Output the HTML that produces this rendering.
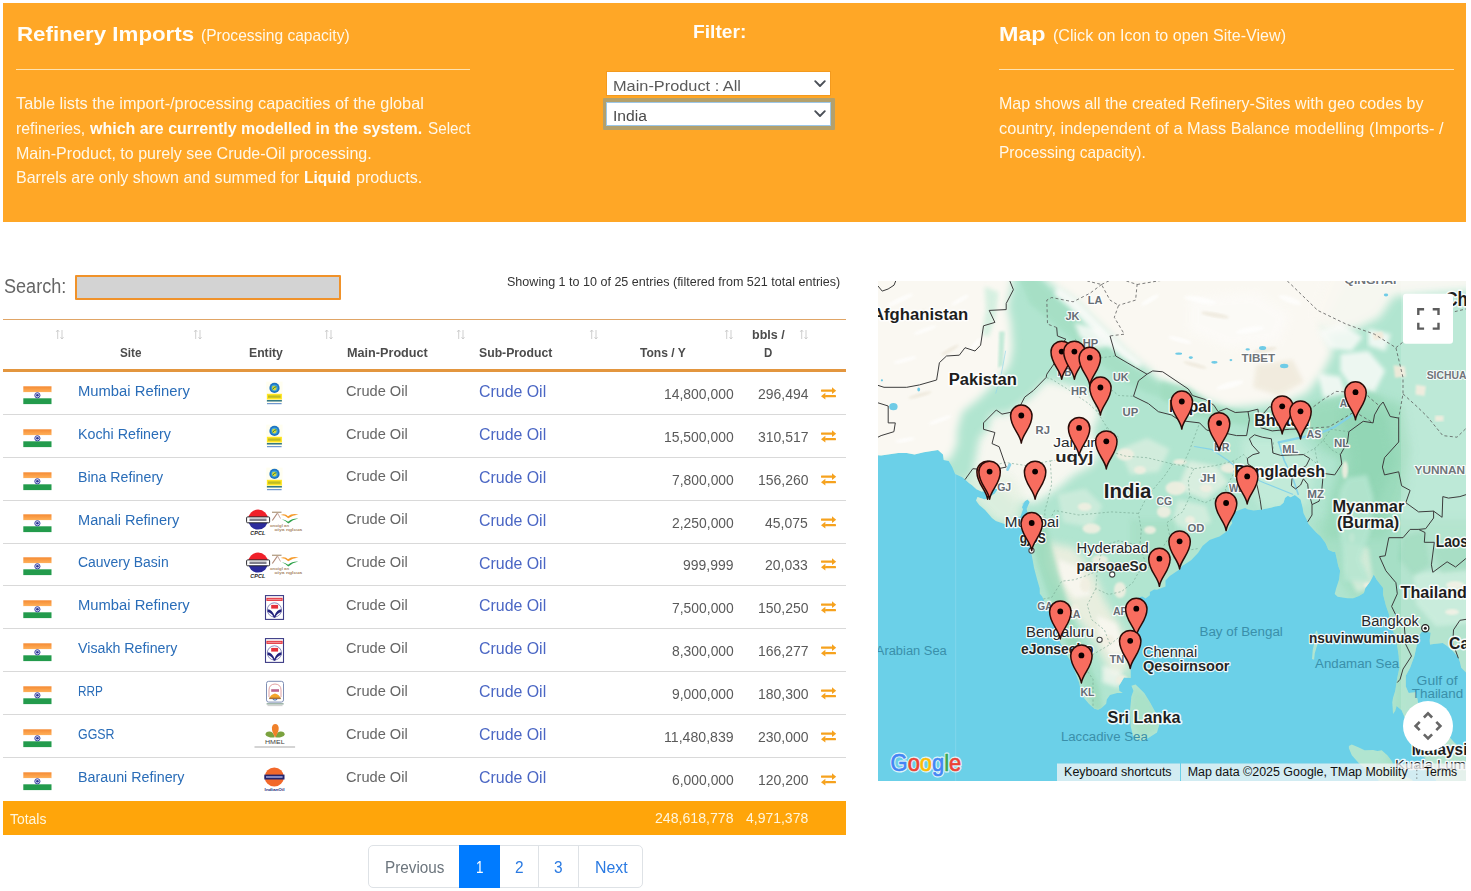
<!DOCTYPE html>
<html lang="en"><head><meta charset="utf-8"><title>Refinery Imports</title>
<style>
html,body{margin:0;padding:0}body{width:1471px;height:891px;position:relative;overflow:hidden;background:#fff;font-family:"Liberation Sans",sans-serif}
.t{position:absolute;white-space:nowrap;line-height:1;display:block;transform-origin:0 50%}
#map{position:absolute;left:878px;top:281px;width:588px;height:500px;overflow:hidden}
</style></head>
<body>
<div style="position:absolute;left:3px;top:3px;width:1463px;height:219px;background:#ffa726"></div>
<div style="position:absolute;left:16px;top:69px;width:453.5px;height:1px;background:#ffe3b0"></div>
<div style="position:absolute;left:999px;top:69px;width:454.5px;height:1px;background:#ffe3b0"></div>
<div style="position:absolute;left:606px;top:71px;width:225px;height:25px;box-sizing:border-box;border:1px solid #f39a1e;background:#fff"></div>
<div style="position:absolute;left:602.5px;top:97.5px;width:232px;height:32px;box-sizing:border-box;background:#b3a06c;border-radius:1px"></div>
<div style="position:absolute;left:606px;top:101.5px;width:225px;height:24.5px;box-sizing:border-box;border:1px solid #9cc7e8;background:#fff"></div>
<svg style="position:absolute;left:812px;top:78.2px" width="16" height="12" viewBox="0 0 16 12"><path d="M3.2 3.2 L8 8 L12.8 3.2" fill="none" stroke="#4a4f57" stroke-width="1.9" stroke-linecap="round" stroke-linejoin="round"/></svg>
<svg style="position:absolute;left:812px;top:108.1px" width="16" height="12" viewBox="0 0 16 12"><path d="M3.2 3.2 L8 8 L12.8 3.2" fill="none" stroke="#4a4f57" stroke-width="1.9" stroke-linecap="round" stroke-linejoin="round"/></svg>
<div style="position:absolute;left:75px;top:275px;width:266px;height:25px;box-sizing:border-box;border:2px solid #f0922a;background:#d3d3d3;border-radius:1px"></div>
<div style="position:absolute;left:3px;top:319px;width:843px;height:1px;background:#e0a566"></div>
<div style="position:absolute;left:3px;top:369px;width:843px;height:2.6px;background:#e3963f"></div>
<div style="position:absolute;left:3px;top:414px;width:843px;height:1px;background:#d9d9d9"></div>
<div style="position:absolute;left:3px;top:457px;width:843px;height:1px;background:#d9d9d9"></div>
<div style="position:absolute;left:3px;top:500px;width:843px;height:1px;background:#d9d9d9"></div>
<div style="position:absolute;left:3px;top:543px;width:843px;height:1px;background:#d9d9d9"></div>
<div style="position:absolute;left:3px;top:585px;width:843px;height:1px;background:#d9d9d9"></div>
<div style="position:absolute;left:3px;top:628px;width:843px;height:1px;background:#d9d9d9"></div>
<div style="position:absolute;left:3px;top:671px;width:843px;height:1px;background:#d9d9d9"></div>
<div style="position:absolute;left:3px;top:714px;width:843px;height:1px;background:#d9d9d9"></div>
<div style="position:absolute;left:3px;top:757px;width:843px;height:1px;background:#d9d9d9"></div>
<svg style="position:absolute;left:55.1px;top:329.1px" width="10" height="11" viewBox="0 0 10 11"><g fill="none" stroke="#c9c9c9" stroke-width="0.9"><path d="M2.7 10 V1 M1.2 2.8 L2.7 1 L4.2 2.8"/><path d="M7 1 V10 M5.5 8.2 L7 10 L8.5 8.2"/></g></svg>
<svg style="position:absolute;left:193.1px;top:329.1px" width="10" height="11" viewBox="0 0 10 11"><g fill="none" stroke="#c9c9c9" stroke-width="0.9"><path d="M2.7 10 V1 M1.2 2.8 L2.7 1 L4.2 2.8"/><path d="M7 1 V10 M5.5 8.2 L7 10 L8.5 8.2"/></g></svg>
<svg style="position:absolute;left:323.9px;top:329.1px" width="10" height="11" viewBox="0 0 10 11"><g fill="none" stroke="#c9c9c9" stroke-width="0.9"><path d="M2.7 10 V1 M1.2 2.8 L2.7 1 L4.2 2.8"/><path d="M7 1 V10 M5.5 8.2 L7 10 L8.5 8.2"/></g></svg>
<svg style="position:absolute;left:456.3px;top:329.1px" width="10" height="11" viewBox="0 0 10 11"><g fill="none" stroke="#c9c9c9" stroke-width="0.9"><path d="M2.7 10 V1 M1.2 2.8 L2.7 1 L4.2 2.8"/><path d="M7 1 V10 M5.5 8.2 L7 10 L8.5 8.2"/></g></svg>
<svg style="position:absolute;left:589.0px;top:329.1px" width="10" height="11" viewBox="0 0 10 11"><g fill="none" stroke="#c9c9c9" stroke-width="0.9"><path d="M2.7 10 V1 M1.2 2.8 L2.7 1 L4.2 2.8"/><path d="M7 1 V10 M5.5 8.2 L7 10 L8.5 8.2"/></g></svg>
<svg style="position:absolute;left:723.6px;top:329.3px" width="10" height="11" viewBox="0 0 10 11"><g fill="none" stroke="#c9c9c9" stroke-width="0.9"><path d="M2.7 10 V1 M1.2 2.8 L2.7 1 L4.2 2.8"/><path d="M7 1 V10 M5.5 8.2 L7 10 L8.5 8.2"/></g></svg>
<svg style="position:absolute;left:798.7px;top:329.3px" width="10" height="11" viewBox="0 0 10 11"><g fill="none" stroke="#c9c9c9" stroke-width="0.9"><path d="M2.7 10 V1 M1.2 2.8 L2.7 1 L4.2 2.8"/><path d="M7 1 V10 M5.5 8.2 L7 10 L8.5 8.2"/></g></svg>
<div style="position:absolute;left:3px;top:800.6px;width:843px;height:34.4px;background:#ffa50a"></div>
<div style="position:absolute;left:368px;top:845px;width:275px;height:43px;box-sizing:border-box;border:1px solid #dee2e6;border-radius:5px;background:#fff"></div>
<div style="position:absolute;left:459px;top:845px;width:41px;height:43px;background:#007bff"></div>
<div style="position:absolute;left:538.2px;top:845px;width:1px;height:43px;background:#dee2e6"></div>
<div style="position:absolute;left:578px;top:845px;width:1px;height:43px;background:#dee2e6"></div>
<svg style="position:absolute;left:22.5px;top:385.80px" width="29" height="19" viewBox="0 0 29 19"><defs><linearGradient id="og0" x1="0" y1="0" x2="0" y2="1"><stop offset="0" stop-color="#f58a33"/><stop offset="1" stop-color="#ffb25c"/></linearGradient></defs><rect x="0.3" y="0.3" width="28.2" height="6" fill="url(#og0)"/><rect x="0.3" y="6.3" width="28.2" height="6" fill="#fff"/><rect x="0.3" y="12.3" width="28.2" height="5.8" fill="#239b4c"/><circle cx="14.4" cy="9.3" r="2.6" fill="#dfe3f5" stroke="#3a45a5" stroke-width="1"/><circle cx="14.4" cy="9.3" r="1.3" fill="#2b3595"/></svg>
<svg style="position:absolute;left:264px;top:380.00px" width="22" height="27" viewBox="264 380 22 27"><rect x="266.3" y="381.6" width="16.2" height="22" fill="#fffef0"/><circle cx="274.5" cy="387.9" r="5.1" fill="#1d74c4"/><circle cx="274.5" cy="387.9" r="3.3" fill="#3fa3d8"/><circle cx="274.3" cy="388.1" r="2.3" fill="#d7d83a"/><path d="M272.6 389.4 q1.8 -3 3.8 -2.6" stroke="#2d7d3a" stroke-width="1" fill="none"/><rect x="266.9" y="393.8" width="15" height="5.7" fill="#ffe51f"/><rect x="268" y="395.4" width="12.6" height="2.4" fill="#8a9a2a" opacity=".55"/><rect x="266.9" y="400.1" width="15" height="1.4" fill="#1f6a78"/><rect x="267" y="403.1" width="14.6" height="1.1" fill="#3a6fc0" opacity=".8"/></svg>
<svg style="position:absolute;left:820px;top:385.90px" width="18" height="14" viewBox="0 0 18 14"><g fill="#f6a21e"><rect x="1" y="3.6" width="11.6" height="2.1" rx=".4"/><path d="M12 1.2 L16.2 4.65 L12 8.1 Z"/><rect x="5" y="9.1" width="11" height="2.1" rx=".4"/><path d="M5.4 6.7 L1 10.15 L5.4 13.6 Z"/></g></svg>
<svg style="position:absolute;left:22.5px;top:428.67px" width="29" height="19" viewBox="0 0 29 19"><defs><linearGradient id="og1" x1="0" y1="0" x2="0" y2="1"><stop offset="0" stop-color="#f58a33"/><stop offset="1" stop-color="#ffb25c"/></linearGradient></defs><rect x="0.3" y="0.3" width="28.2" height="6" fill="url(#og1)"/><rect x="0.3" y="6.3" width="28.2" height="6" fill="#fff"/><rect x="0.3" y="12.3" width="28.2" height="5.8" fill="#239b4c"/><circle cx="14.4" cy="9.3" r="2.6" fill="#dfe3f5" stroke="#3a45a5" stroke-width="1"/><circle cx="14.4" cy="9.3" r="1.3" fill="#2b3595"/></svg>
<svg style="position:absolute;left:264px;top:422.87px" width="22" height="27" viewBox="264 380 22 27"><rect x="266.3" y="381.6" width="16.2" height="22" fill="#fffef0"/><circle cx="274.5" cy="387.9" r="5.1" fill="#1d74c4"/><circle cx="274.5" cy="387.9" r="3.3" fill="#3fa3d8"/><circle cx="274.3" cy="388.1" r="2.3" fill="#d7d83a"/><path d="M272.6 389.4 q1.8 -3 3.8 -2.6" stroke="#2d7d3a" stroke-width="1" fill="none"/><rect x="266.9" y="393.8" width="15" height="5.7" fill="#ffe51f"/><rect x="268" y="395.4" width="12.6" height="2.4" fill="#8a9a2a" opacity=".55"/><rect x="266.9" y="400.1" width="15" height="1.4" fill="#1f6a78"/><rect x="267" y="403.1" width="14.6" height="1.1" fill="#3a6fc0" opacity=".8"/></svg>
<svg style="position:absolute;left:820px;top:428.77px" width="18" height="14" viewBox="0 0 18 14"><g fill="#f6a21e"><rect x="1" y="3.6" width="11.6" height="2.1" rx=".4"/><path d="M12 1.2 L16.2 4.65 L12 8.1 Z"/><rect x="5" y="9.1" width="11" height="2.1" rx=".4"/><path d="M5.4 6.7 L1 10.15 L5.4 13.6 Z"/></g></svg>
<svg style="position:absolute;left:22.5px;top:471.54px" width="29" height="19" viewBox="0 0 29 19"><defs><linearGradient id="og2" x1="0" y1="0" x2="0" y2="1"><stop offset="0" stop-color="#f58a33"/><stop offset="1" stop-color="#ffb25c"/></linearGradient></defs><rect x="0.3" y="0.3" width="28.2" height="6" fill="url(#og2)"/><rect x="0.3" y="6.3" width="28.2" height="6" fill="#fff"/><rect x="0.3" y="12.3" width="28.2" height="5.8" fill="#239b4c"/><circle cx="14.4" cy="9.3" r="2.6" fill="#dfe3f5" stroke="#3a45a5" stroke-width="1"/><circle cx="14.4" cy="9.3" r="1.3" fill="#2b3595"/></svg>
<svg style="position:absolute;left:264px;top:465.74px" width="22" height="27" viewBox="264 380 22 27"><rect x="266.3" y="381.6" width="16.2" height="22" fill="#fffef0"/><circle cx="274.5" cy="387.9" r="5.1" fill="#1d74c4"/><circle cx="274.5" cy="387.9" r="3.3" fill="#3fa3d8"/><circle cx="274.3" cy="388.1" r="2.3" fill="#d7d83a"/><path d="M272.6 389.4 q1.8 -3 3.8 -2.6" stroke="#2d7d3a" stroke-width="1" fill="none"/><rect x="266.9" y="393.8" width="15" height="5.7" fill="#ffe51f"/><rect x="268" y="395.4" width="12.6" height="2.4" fill="#8a9a2a" opacity=".55"/><rect x="266.9" y="400.1" width="15" height="1.4" fill="#1f6a78"/><rect x="267" y="403.1" width="14.6" height="1.1" fill="#3a6fc0" opacity=".8"/></svg>
<svg style="position:absolute;left:820px;top:471.64px" width="18" height="14" viewBox="0 0 18 14"><g fill="#f6a21e"><rect x="1" y="3.6" width="11.6" height="2.1" rx=".4"/><path d="M12 1.2 L16.2 4.65 L12 8.1 Z"/><rect x="5" y="9.1" width="11" height="2.1" rx=".4"/><path d="M5.4 6.7 L1 10.15 L5.4 13.6 Z"/></g></svg>
<svg style="position:absolute;left:22.5px;top:514.41px" width="29" height="19" viewBox="0 0 29 19"><defs><linearGradient id="og3" x1="0" y1="0" x2="0" y2="1"><stop offset="0" stop-color="#f58a33"/><stop offset="1" stop-color="#ffb25c"/></linearGradient></defs><rect x="0.3" y="0.3" width="28.2" height="6" fill="url(#og3)"/><rect x="0.3" y="6.3" width="28.2" height="6" fill="#fff"/><rect x="0.3" y="12.3" width="28.2" height="5.8" fill="#239b4c"/><circle cx="14.4" cy="9.3" r="2.6" fill="#dfe3f5" stroke="#3a45a5" stroke-width="1"/><circle cx="14.4" cy="9.3" r="1.3" fill="#2b3595"/></svg>
<svg style="position:absolute;left:244px;top:506.00px" width="62" height="34" viewBox="244 506 62 34" font-family="Liberation Sans, sans-serif"><defs><clipPath id="cpc128"><circle cx="258.1" cy="519.6" r="10"/></clipPath></defs><g clip-path="url(#cpc128)"><rect x="246" y="508" width="25" height="11.6" fill="#f0202a"/><rect x="246" y="519.6" width="25" height="12" fill="#2a2a9c"/></g><rect x="246.6" y="516.9" width="23" height="5.9" rx="1" fill="#fff" stroke="#2a2a30" stroke-width="1"/><rect x="249.5" y="518.6" width="17" height="2.4" fill="#556" opacity=".75"/><text x="250.3" y="535" font-family="Liberation Sans" font-weight="700" font-style="italic" font-size="5.2" textLength="15" lengthAdjust="spacingAndGlyphs" fill="#222">CPCL</text><path d="M272 512.3 h9.5" stroke="#b9a58c" stroke-width="1.4" fill="none"/><path d="M277.5 513 L272.3 520.5" stroke="#b08a78" stroke-width="1.2" fill="none"/><path d="M277.5 513 L280.5 518.5" stroke="#c9a9a0" stroke-width="1" fill="none"/><path d="M280.5 515 q4.5 -2.2 7.5 1.2 q4 -3.2 10.5 -1.6 q-6 0.6 -10.2 3.6 q-3.4 -3.4 -7.8 -3.2z" fill="#f59b2c"/><path d="M281.5 519.3 q3.6 0.2 6.6 2.4 q4.4 -3.6 10.2 -3.2 q-5.6 1.2 -10 5 q-3.2 -3.2 -6.8 -4.2z" fill="#2ea24a"/><text x="270" y="526.6" font-size="4.2" font-weight="700" fill="#a98868" textLength="19" lengthAdjust="spacingAndGlyphs">onoigl an</text><text x="274.5" y="531.4" font-size="4.4" font-weight="700" fill="#a98868" textLength="27.5" lengthAdjust="spacingAndGlyphs">oiya nglcua</text></svg>
<svg style="position:absolute;left:820px;top:514.51px" width="18" height="14" viewBox="0 0 18 14"><g fill="#f6a21e"><rect x="1" y="3.6" width="11.6" height="2.1" rx=".4"/><path d="M12 1.2 L16.2 4.65 L12 8.1 Z"/><rect x="5" y="9.1" width="11" height="2.1" rx=".4"/><path d="M5.4 6.7 L1 10.15 L5.4 13.6 Z"/></g></svg>
<svg style="position:absolute;left:22.5px;top:557.28px" width="29" height="19" viewBox="0 0 29 19"><defs><linearGradient id="og4" x1="0" y1="0" x2="0" y2="1"><stop offset="0" stop-color="#f58a33"/><stop offset="1" stop-color="#ffb25c"/></linearGradient></defs><rect x="0.3" y="0.3" width="28.2" height="6" fill="url(#og4)"/><rect x="0.3" y="6.3" width="28.2" height="6" fill="#fff"/><rect x="0.3" y="12.3" width="28.2" height="5.8" fill="#239b4c"/><circle cx="14.4" cy="9.3" r="2.6" fill="#dfe3f5" stroke="#3a45a5" stroke-width="1"/><circle cx="14.4" cy="9.3" r="1.3" fill="#2b3595"/></svg>
<svg style="position:absolute;left:244px;top:548.87px" width="62" height="34" viewBox="244 506 62 34" font-family="Liberation Sans, sans-serif"><defs><clipPath id="cpc171"><circle cx="258.1" cy="519.6" r="10"/></clipPath></defs><g clip-path="url(#cpc171)"><rect x="246" y="508" width="25" height="11.6" fill="#f0202a"/><rect x="246" y="519.6" width="25" height="12" fill="#2a2a9c"/></g><rect x="246.6" y="516.9" width="23" height="5.9" rx="1" fill="#fff" stroke="#2a2a30" stroke-width="1"/><rect x="249.5" y="518.6" width="17" height="2.4" fill="#556" opacity=".75"/><text x="250.3" y="535" font-family="Liberation Sans" font-weight="700" font-style="italic" font-size="5.2" textLength="15" lengthAdjust="spacingAndGlyphs" fill="#222">CPCL</text><path d="M272 512.3 h9.5" stroke="#b9a58c" stroke-width="1.4" fill="none"/><path d="M277.5 513 L272.3 520.5" stroke="#b08a78" stroke-width="1.2" fill="none"/><path d="M277.5 513 L280.5 518.5" stroke="#c9a9a0" stroke-width="1" fill="none"/><path d="M280.5 515 q4.5 -2.2 7.5 1.2 q4 -3.2 10.5 -1.6 q-6 0.6 -10.2 3.6 q-3.4 -3.4 -7.8 -3.2z" fill="#f59b2c"/><path d="M281.5 519.3 q3.6 0.2 6.6 2.4 q4.4 -3.6 10.2 -3.2 q-5.6 1.2 -10 5 q-3.2 -3.2 -6.8 -4.2z" fill="#2ea24a"/><text x="270" y="526.6" font-size="4.2" font-weight="700" fill="#a98868" textLength="19" lengthAdjust="spacingAndGlyphs">onoigl an</text><text x="274.5" y="531.4" font-size="4.4" font-weight="700" fill="#a98868" textLength="27.5" lengthAdjust="spacingAndGlyphs">oiya nglcua</text></svg>
<svg style="position:absolute;left:820px;top:557.38px" width="18" height="14" viewBox="0 0 18 14"><g fill="#f6a21e"><rect x="1" y="3.6" width="11.6" height="2.1" rx=".4"/><path d="M12 1.2 L16.2 4.65 L12 8.1 Z"/><rect x="5" y="9.1" width="11" height="2.1" rx=".4"/><path d="M5.4 6.7 L1 10.15 L5.4 13.6 Z"/></g></svg>
<svg style="position:absolute;left:22.5px;top:600.15px" width="29" height="19" viewBox="0 0 29 19"><defs><linearGradient id="og5" x1="0" y1="0" x2="0" y2="1"><stop offset="0" stop-color="#f58a33"/><stop offset="1" stop-color="#ffb25c"/></linearGradient></defs><rect x="0.3" y="0.3" width="28.2" height="6" fill="url(#og5)"/><rect x="0.3" y="6.3" width="28.2" height="6" fill="#fff"/><rect x="0.3" y="12.3" width="28.2" height="5.8" fill="#239b4c"/><circle cx="14.4" cy="9.3" r="2.6" fill="#dfe3f5" stroke="#3a45a5" stroke-width="1"/><circle cx="14.4" cy="9.3" r="1.3" fill="#2b3595"/></svg>
<svg style="position:absolute;left:263px;top:593.00px" width="23" height="28" viewBox="263 593 23 28"><rect x="265.5" y="595.6" width="18" height="23.8" fill="#fff" stroke="#3d3c86" stroke-width="1.1"/><rect x="266.4" y="597.8" width="16.2" height="3.1" fill="#e4303a"/><rect x="267.4" y="598.8" width="14.2" height="1" fill="#fff" opacity=".55"/><circle cx="274.4" cy="609.9" r="7.1" fill="#fff" stroke="#5b5aa0" stroke-width=".7"/><rect x="271.2" y="604.9" width="6.9" height="3.7" fill="#e4303a"/><path d="M267.6 609.3 q4.6 0.2 6.9 6.4 q2.2 -6.2 6.9 -6.4 l0 2.6 q-4.4 0.8 -6.2 5.9 l-1.4 0 q-1.8 -5.1 -6.2 -5.9z" fill="#23237d"/></svg>
<svg style="position:absolute;left:820px;top:600.25px" width="18" height="14" viewBox="0 0 18 14"><g fill="#f6a21e"><rect x="1" y="3.6" width="11.6" height="2.1" rx=".4"/><path d="M12 1.2 L16.2 4.65 L12 8.1 Z"/><rect x="5" y="9.1" width="11" height="2.1" rx=".4"/><path d="M5.4 6.7 L1 10.15 L5.4 13.6 Z"/></g></svg>
<svg style="position:absolute;left:22.5px;top:643.02px" width="29" height="19" viewBox="0 0 29 19"><defs><linearGradient id="og6" x1="0" y1="0" x2="0" y2="1"><stop offset="0" stop-color="#f58a33"/><stop offset="1" stop-color="#ffb25c"/></linearGradient></defs><rect x="0.3" y="0.3" width="28.2" height="6" fill="url(#og6)"/><rect x="0.3" y="6.3" width="28.2" height="6" fill="#fff"/><rect x="0.3" y="12.3" width="28.2" height="5.8" fill="#239b4c"/><circle cx="14.4" cy="9.3" r="2.6" fill="#dfe3f5" stroke="#3a45a5" stroke-width="1"/><circle cx="14.4" cy="9.3" r="1.3" fill="#2b3595"/></svg>
<svg style="position:absolute;left:263px;top:635.87px" width="23" height="28" viewBox="263 593 23 28"><rect x="265.5" y="595.6" width="18" height="23.8" fill="#fff" stroke="#3d3c86" stroke-width="1.1"/><rect x="266.4" y="597.8" width="16.2" height="3.1" fill="#e4303a"/><rect x="267.4" y="598.8" width="14.2" height="1" fill="#fff" opacity=".55"/><circle cx="274.4" cy="609.9" r="7.1" fill="#fff" stroke="#5b5aa0" stroke-width=".7"/><rect x="271.2" y="604.9" width="6.9" height="3.7" fill="#e4303a"/><path d="M267.6 609.3 q4.6 0.2 6.9 6.4 q2.2 -6.2 6.9 -6.4 l0 2.6 q-4.4 0.8 -6.2 5.9 l-1.4 0 q-1.8 -5.1 -6.2 -5.9z" fill="#23237d"/></svg>
<svg style="position:absolute;left:820px;top:643.12px" width="18" height="14" viewBox="0 0 18 14"><g fill="#f6a21e"><rect x="1" y="3.6" width="11.6" height="2.1" rx=".4"/><path d="M12 1.2 L16.2 4.65 L12 8.1 Z"/><rect x="5" y="9.1" width="11" height="2.1" rx=".4"/><path d="M5.4 6.7 L1 10.15 L5.4 13.6 Z"/></g></svg>
<svg style="position:absolute;left:22.5px;top:685.89px" width="29" height="19" viewBox="0 0 29 19"><defs><linearGradient id="og7" x1="0" y1="0" x2="0" y2="1"><stop offset="0" stop-color="#f58a33"/><stop offset="1" stop-color="#ffb25c"/></linearGradient></defs><rect x="0.3" y="0.3" width="28.2" height="6" fill="url(#og7)"/><rect x="0.3" y="6.3" width="28.2" height="6" fill="#fff"/><rect x="0.3" y="12.3" width="28.2" height="5.8" fill="#239b4c"/><circle cx="14.4" cy="9.3" r="2.6" fill="#dfe3f5" stroke="#3a45a5" stroke-width="1"/><circle cx="14.4" cy="9.3" r="1.3" fill="#2b3595"/></svg>
<svg style="position:absolute;left:263px;top:679.00px" width="23" height="28" viewBox="263 679 23 28"><rect x="266.5" y="681.3" width="17" height="20.8" rx="2.2" fill="#fff" stroke="#7f8fb5" stroke-width="1"/><path d="M269 697 V690 q0 -5.6 6 -6 q6 0.4 6 6 V697" fill="none" stroke="#d98a8a" stroke-width=".8"/><rect x="271.2" y="689.2" width="7.8" height="2.6" fill="#b04a78" opacity=".85"/><path d="M269.4 698.6 q1 -4.4 5.6 -5.2 q4.6 0.8 5.6 5.2z" fill="#f4a62a"/><rect x="269.2" y="697.6" width="11.6" height="1.5" fill="#a5713a"/><path d="M272.8 699.4 q2.2 1.4 4.4 0" stroke="#3a70b8" stroke-width="1" fill="none"/><rect x="266.6" y="703.2" width="17" height="1.3" fill="#6c8c7c" opacity=".8"/><rect x="267.5" y="705.2" width="15" height=".9" fill="#bbb" opacity=".8"/></svg>
<svg style="position:absolute;left:820px;top:685.99px" width="18" height="14" viewBox="0 0 18 14"><g fill="#f6a21e"><rect x="1" y="3.6" width="11.6" height="2.1" rx=".4"/><path d="M12 1.2 L16.2 4.65 L12 8.1 Z"/><rect x="5" y="9.1" width="11" height="2.1" rx=".4"/><path d="M5.4 6.7 L1 10.15 L5.4 13.6 Z"/></g></svg>
<svg style="position:absolute;left:22.5px;top:728.76px" width="29" height="19" viewBox="0 0 29 19"><defs><linearGradient id="og8" x1="0" y1="0" x2="0" y2="1"><stop offset="0" stop-color="#f58a33"/><stop offset="1" stop-color="#ffb25c"/></linearGradient></defs><rect x="0.3" y="0.3" width="28.2" height="6" fill="url(#og8)"/><rect x="0.3" y="6.3" width="28.2" height="6" fill="#fff"/><rect x="0.3" y="12.3" width="28.2" height="5.8" fill="#239b4c"/><circle cx="14.4" cy="9.3" r="2.6" fill="#dfe3f5" stroke="#3a45a5" stroke-width="1"/><circle cx="14.4" cy="9.3" r="1.3" fill="#2b3595"/></svg>
<svg style="position:absolute;left:252px;top:722.00px" width="46" height="28" viewBox="252 722 46 28"><path d="M265.4 734.6 q0.4 -3.4 4.6 -3 q3.6 0.6 4.8 5.6 q-3 0.8 -6 -0.2 q-3 -0.8 -3.4 -2.4z" fill="#7ba23f"/><path d="M284.8 734.6 q-0.4 -3.4 -4.6 -3 q-3.6 0.6 -4.8 5.6 q3 0.8 6 -0.2 q3 -0.8 3.4 -2.4z" fill="#7ba23f"/><path d="M275.3 737.4 q-3.6 -5.4 -3.4 -9.6 q0.4 -3.6 3.4 -3.8 q3 0.2 3.4 3.8 q0.2 4.2 -3.4 9.6z" fill="#f0812a"/><text x="265" y="743.7" font-family="Liberation Sans" font-size="4.8" font-weight="400" textLength="19.6" lengthAdjust="spacingAndGlyphs" fill="#444">HMEL</text><rect x="254.5" y="746.4" width="40.6" height="1.2" fill="#888" opacity=".6"/></svg>
<svg style="position:absolute;left:820px;top:728.86px" width="18" height="14" viewBox="0 0 18 14"><g fill="#f6a21e"><rect x="1" y="3.6" width="11.6" height="2.1" rx=".4"/><path d="M12 1.2 L16.2 4.65 L12 8.1 Z"/><rect x="5" y="9.1" width="11" height="2.1" rx=".4"/><path d="M5.4 6.7 L1 10.15 L5.4 13.6 Z"/></g></svg>
<svg style="position:absolute;left:22.5px;top:771.63px" width="29" height="19" viewBox="0 0 29 19"><defs><linearGradient id="og9" x1="0" y1="0" x2="0" y2="1"><stop offset="0" stop-color="#f58a33"/><stop offset="1" stop-color="#ffb25c"/></linearGradient></defs><rect x="0.3" y="0.3" width="28.2" height="6" fill="url(#og9)"/><rect x="0.3" y="6.3" width="28.2" height="6" fill="#fff"/><rect x="0.3" y="12.3" width="28.2" height="5.8" fill="#239b4c"/><circle cx="14.4" cy="9.3" r="2.6" fill="#dfe3f5" stroke="#3a45a5" stroke-width="1"/><circle cx="14.4" cy="9.3" r="1.3" fill="#2b3595"/></svg>
<svg style="position:absolute;left:262px;top:765.00px" width="26" height="30" viewBox="262 765 26 30"><circle cx="274.3" cy="777" r="9.6" fill="#f2682a"/><rect x="264.3" y="774.6" width="20.2" height="4.9" fill="#23246e"/><rect x="266" y="776" width="16.6" height="2" fill="#9aa0d8" opacity=".8"/><text x="264.6" y="791.4" font-family="Liberation Sans" font-size="4.4" font-weight="700" textLength="20" lengthAdjust="spacingAndGlyphs" fill="#1a2a7a">IndianOil</text></svg>
<svg style="position:absolute;left:820px;top:771.73px" width="18" height="14" viewBox="0 0 18 14"><g fill="#f6a21e"><rect x="1" y="3.6" width="11.6" height="2.1" rx=".4"/><path d="M12 1.2 L16.2 4.65 L12 8.1 Z"/><rect x="5" y="9.1" width="11" height="2.1" rx=".4"/><path d="M5.4 6.7 L1 10.15 L5.4 13.6 Z"/></g></svg>
<span class="t" id="t0" style="left:16.60px;top:22.70px;font-size:21px;font-weight:700;color:#fffdf8;transform:scaleX(1.0613);">Refinery Imports</span>
<span class="t" id="t1" style="left:201.00px;top:26.70px;font-size:16.5px;font-weight:400;color:#fff8ea;transform:scaleX(0.9421);">(Processing capacity)</span>
<span class="t" id="t2" style="left:16.30px;top:95.40px;font-size:16.5px;font-weight:400;color:#fff8ea;transform:scaleX(0.9883);">Table lists the import-/processing capacities of the global</span>
<span class="t" id="t3" style="left:16.30px;top:120.00px;font-size:16.5px;font-weight:400;color:#fff8ea;transform:scaleX(0.9551);">refineries,</span>
<span class="t" id="t4" style="left:89.70px;top:120.00px;font-size:16.5px;font-weight:700;color:#fffdf8;transform:scaleX(0.9686);">which are currently modelled in the system.</span>
<span class="t" id="t5" style="left:427.50px;top:120.00px;font-size:16.5px;font-weight:400;color:#fff8ea;transform:scaleX(0.9246);">Select</span>
<span class="t" id="t6" style="left:16.30px;top:144.70px;font-size:16.5px;font-weight:400;color:#fff8ea;transform:scaleX(0.9721);">Main-Product, to purely see Crude-Oil processing.</span>
<span class="t" id="t7" style="left:16.30px;top:168.90px;font-size:16.5px;font-weight:400;color:#fff8ea;transform:scaleX(0.9711);">Barrels are only shown and summed for</span>
<span class="t" id="t8" style="left:304.10px;top:168.90px;font-size:16.5px;font-weight:700;color:#fffdf8;transform:scaleX(0.9437);">Liquid</span>
<span class="t" id="t9" style="left:356.30px;top:168.90px;font-size:16.5px;font-weight:400;color:#fff8ea;transform:scaleX(0.9753);">products.</span>
<span class="t" id="t10" style="left:692.50px;top:21.90px;font-size:19px;font-weight:700;color:#fffdf8;transform:scaleX(1.0117);">Filter:</span>
<span class="t" id="t11" style="left:613.00px;top:78.00px;font-size:15.5px;font-weight:400;color:#5a5a5a;transform:scaleX(1.0538);">Main-Product : All</span>
<span class="t" id="t12" style="left:613.00px;top:107.50px;font-size:15.5px;font-weight:400;color:#4a4a4a;transform:scaleX(1.0082);">India</span>
<span class="t" id="t13" style="left:999.40px;top:22.70px;font-size:21px;font-weight:700;color:#fffdf8;transform:scaleX(1.1095);">Map</span>
<span class="t" id="t14" style="left:1053.40px;top:26.70px;font-size:16.5px;font-weight:400;color:#fff8ea;transform:scaleX(0.9746);">(Click on Icon to open Site-View)</span>
<span class="t" id="t15" style="left:999.40px;top:95.10px;font-size:16.5px;font-weight:400;color:#fff8ea;transform:scaleX(0.9724);">Map shows all the created Refinery-Sites with geo codes by</span>
<span class="t" id="t16" style="left:999.40px;top:120.00px;font-size:16.5px;font-weight:400;color:#fff8ea;transform:scaleX(0.9920);">country, independent of a Mass Balance modelling (Imports- /</span>
<span class="t" id="t17" style="left:999.40px;top:143.90px;font-size:16.5px;font-weight:400;color:#fff8ea;transform:scaleX(0.9361);">Processing capacity).</span>
<span class="t" id="t18" style="left:3.70px;top:277.00px;font-size:19.5px;font-weight:400;color:#666;transform:scaleX(0.9270);">Search:</span>
<span class="t" id="t19" style="left:507.10px;top:275.90px;font-size:12.6px;font-weight:400;color:#333;transform:scaleX(0.9960);">Showing 1 to 10 of 25 entries (filtered from 521 total entries)</span>
<span class="t" id="t20" style="left:119.80px;top:346.90px;font-size:12.3px;font-weight:700;color:#4c4c4c;transform:scaleX(0.9529);">Site</span>
<span class="t" id="t21" style="left:248.60px;top:346.90px;font-size:12.3px;font-weight:700;color:#4c4c4c;transform:scaleX(0.9920);">Entity</span>
<span class="t" id="t22" style="left:346.70px;top:346.90px;font-size:12.3px;font-weight:700;color:#4c4c4c;transform:scaleX(1.0285);">Main-Product</span>
<span class="t" id="t23" style="left:478.90px;top:346.90px;font-size:12.3px;font-weight:700;color:#4c4c4c;transform:scaleX(0.9948);">Sub-Product</span>
<span class="t" id="t24" style="left:640.30px;top:346.90px;font-size:12.3px;font-weight:700;color:#4c4c4c;transform:scaleX(0.9807);">Tons / Y</span>
<span class="t" id="t25" style="left:751.60px;top:328.90px;font-size:12.3px;font-weight:700;color:#4c4c4c;transform:scaleX(1.0179);">bbls /</span>
<span class="t" id="t26" style="left:763.50px;top:346.90px;font-size:12.3px;font-weight:700;color:#4c4c4c;transform:scaleX(0.9336);">D</span>
<span class="t" id="t27" style="left:77.50px;top:383.00px;font-size:15.4px;font-weight:400;color:#2a6db8;transform:scaleX(0.9611);">Mumbai Refinery</span>
<span class="t" id="t28" style="left:346.40px;top:382.70px;font-size:15.5px;font-weight:400;color:#666;transform:scaleX(0.9424);">Crude Oil</span>
<span class="t" id="t29" style="left:478.80px;top:383.10px;font-size:16.4px;font-weight:400;color:#4a66c4;transform:scaleX(0.9706);">Crude Oil</span>
<span class="t" id="t30" style="left:663.76px;top:385.90px;font-size:15px;font-weight:400;color:#5a5a5a;transform:scaleX(0.9276);">14,800,000</span>
<span class="t" id="t31" style="left:757.62px;top:385.90px;font-size:15px;font-weight:400;color:#5a5a5a;transform:scaleX(0.9308);">296,494</span>
<span class="t" id="t32" style="left:77.50px;top:425.87px;font-size:15.4px;font-weight:400;color:#2a6db8;transform:scaleX(0.9281);">Kochi Refinery</span>
<span class="t" id="t33" style="left:346.40px;top:425.57px;font-size:15.5px;font-weight:400;color:#666;transform:scaleX(0.9424);">Crude Oil</span>
<span class="t" id="t34" style="left:478.80px;top:425.97px;font-size:16.4px;font-weight:400;color:#4a66c4;transform:scaleX(0.9706);">Crude Oil</span>
<span class="t" id="t35" style="left:663.76px;top:428.77px;font-size:15px;font-weight:400;color:#5a5a5a;transform:scaleX(0.9276);">15,500,000</span>
<span class="t" id="t36" style="left:757.62px;top:428.77px;font-size:15px;font-weight:400;color:#5a5a5a;transform:scaleX(0.9308);">310,517</span>
<span class="t" id="t37" style="left:77.50px;top:468.74px;font-size:15.4px;font-weight:400;color:#2a6db8;transform:scaleX(0.9222);">Bina Refinery</span>
<span class="t" id="t38" style="left:346.40px;top:468.44px;font-size:15.5px;font-weight:400;color:#666;transform:scaleX(0.9424);">Crude Oil</span>
<span class="t" id="t39" style="left:478.80px;top:468.84px;font-size:16.4px;font-weight:400;color:#4a66c4;transform:scaleX(0.9706);">Crude Oil</span>
<span class="t" id="t40" style="left:671.59px;top:471.64px;font-size:15px;font-weight:400;color:#5a5a5a;transform:scaleX(0.9262);">7,800,000</span>
<span class="t" id="t41" style="left:757.62px;top:471.64px;font-size:15px;font-weight:400;color:#5a5a5a;transform:scaleX(0.9308);">156,260</span>
<span class="t" id="t42" style="left:77.50px;top:511.61px;font-size:15.4px;font-weight:400;color:#2a6db8;transform:scaleX(0.9463);">Manali Refinery</span>
<span class="t" id="t43" style="left:346.40px;top:511.31px;font-size:15.5px;font-weight:400;color:#666;transform:scaleX(0.9424);">Crude Oil</span>
<span class="t" id="t44" style="left:478.80px;top:511.71px;font-size:16.4px;font-weight:400;color:#4a66c4;transform:scaleX(0.9706);">Crude Oil</span>
<span class="t" id="t45" style="left:671.59px;top:514.51px;font-size:15px;font-weight:400;color:#5a5a5a;transform:scaleX(0.9262);">2,250,000</span>
<span class="t" id="t46" style="left:765.45px;top:514.51px;font-size:15px;font-weight:400;color:#5a5a5a;transform:scaleX(0.9294);">45,075</span>
<span class="t" id="t47" style="left:77.50px;top:554.48px;font-size:15.4px;font-weight:400;color:#2a6db8;transform:scaleX(0.9062);">Cauvery Basin</span>
<span class="t" id="t48" style="left:346.40px;top:554.18px;font-size:15.5px;font-weight:400;color:#666;transform:scaleX(0.9424);">Crude Oil</span>
<span class="t" id="t49" style="left:478.80px;top:554.58px;font-size:16.4px;font-weight:400;color:#4a66c4;transform:scaleX(0.9706);">Crude Oil</span>
<span class="t" id="t50" style="left:682.92px;top:557.38px;font-size:15px;font-weight:400;color:#5a5a5a;transform:scaleX(0.9308);">999,999</span>
<span class="t" id="t51" style="left:765.45px;top:557.38px;font-size:15px;font-weight:400;color:#5a5a5a;transform:scaleX(0.9294);">20,033</span>
<span class="t" id="t52" style="left:77.50px;top:597.35px;font-size:15.4px;font-weight:400;color:#2a6db8;transform:scaleX(0.9602);">Mumbai Refinery</span>
<span class="t" id="t53" style="left:346.40px;top:597.05px;font-size:15.5px;font-weight:400;color:#666;transform:scaleX(0.9424);">Crude Oil</span>
<span class="t" id="t54" style="left:478.80px;top:597.45px;font-size:16.4px;font-weight:400;color:#4a66c4;transform:scaleX(0.9706);">Crude Oil</span>
<span class="t" id="t55" style="left:671.59px;top:600.25px;font-size:15px;font-weight:400;color:#5a5a5a;transform:scaleX(0.9262);">7,500,000</span>
<span class="t" id="t56" style="left:757.62px;top:600.25px;font-size:15px;font-weight:400;color:#5a5a5a;transform:scaleX(0.9308);">150,250</span>
<span class="t" id="t57" style="left:77.50px;top:640.22px;font-size:15.4px;font-weight:400;color:#2a6db8;transform:scaleX(0.9236);">Visakh Refinery</span>
<span class="t" id="t58" style="left:346.40px;top:639.92px;font-size:15.5px;font-weight:400;color:#666;transform:scaleX(0.9424);">Crude Oil</span>
<span class="t" id="t59" style="left:478.80px;top:640.32px;font-size:16.4px;font-weight:400;color:#4a66c4;transform:scaleX(0.9706);">Crude Oil</span>
<span class="t" id="t60" style="left:671.59px;top:643.12px;font-size:15px;font-weight:400;color:#5a5a5a;transform:scaleX(0.9262);">8,300,000</span>
<span class="t" id="t61" style="left:757.62px;top:643.12px;font-size:15px;font-weight:400;color:#5a5a5a;transform:scaleX(0.9308);">166,277</span>
<span class="t" id="t62" style="left:77.50px;top:683.09px;font-size:15.4px;font-weight:400;color:#2a6db8;transform:scaleX(0.7662);">RRP</span>
<span class="t" id="t63" style="left:346.40px;top:682.79px;font-size:15.5px;font-weight:400;color:#666;transform:scaleX(0.9424);">Crude Oil</span>
<span class="t" id="t64" style="left:478.80px;top:683.19px;font-size:16.4px;font-weight:400;color:#4a66c4;transform:scaleX(0.9706);">Crude Oil</span>
<span class="t" id="t65" style="left:671.59px;top:685.99px;font-size:15px;font-weight:400;color:#5a5a5a;transform:scaleX(0.9262);">9,000,000</span>
<span class="t" id="t66" style="left:757.62px;top:685.99px;font-size:15px;font-weight:400;color:#5a5a5a;transform:scaleX(0.9308);">180,300</span>
<span class="t" id="t67" style="left:77.50px;top:725.96px;font-size:15.4px;font-weight:400;color:#2a6db8;transform:scaleX(0.8052);">GGSR</span>
<span class="t" id="t68" style="left:346.40px;top:725.66px;font-size:15.5px;font-weight:400;color:#666;transform:scaleX(0.9424);">Crude Oil</span>
<span class="t" id="t69" style="left:478.80px;top:726.06px;font-size:16.4px;font-weight:400;color:#4a66c4;transform:scaleX(0.9706);">Crude Oil</span>
<span class="t" id="t70" style="left:663.76px;top:728.86px;font-size:15px;font-weight:400;color:#5a5a5a;transform:scaleX(0.9415);">11,480,839</span>
<span class="t" id="t71" style="left:757.62px;top:728.86px;font-size:15px;font-weight:400;color:#5a5a5a;transform:scaleX(0.9308);">230,000</span>
<span class="t" id="t72" style="left:77.50px;top:768.83px;font-size:15.4px;font-weight:400;color:#2a6db8;transform:scaleX(0.9290);">Barauni Refinery</span>
<span class="t" id="t73" style="left:346.40px;top:768.53px;font-size:15.5px;font-weight:400;color:#666;transform:scaleX(0.9424);">Crude Oil</span>
<span class="t" id="t74" style="left:478.80px;top:768.93px;font-size:16.4px;font-weight:400;color:#4a66c4;transform:scaleX(0.9706);">Crude Oil</span>
<span class="t" id="t75" style="left:671.59px;top:771.73px;font-size:15px;font-weight:400;color:#5a5a5a;transform:scaleX(0.9262);">6,000,000</span>
<span class="t" id="t76" style="left:757.62px;top:771.73px;font-size:15px;font-weight:400;color:#5a5a5a;transform:scaleX(0.9308);">120,200</span>
<span class="t" id="t77" style="left:10.20px;top:810.80px;font-size:15.4px;font-weight:400;color:#fff6dd;transform:scaleX(0.9051);">Totals</span>
<span class="t" id="t78" style="left:655.00px;top:810.30px;font-size:15px;font-weight:400;color:#fff6dd;transform:scaleX(0.9410);">248,618,778</span>
<span class="t" id="t79" style="left:746.00px;top:810.30px;font-size:15px;font-weight:400;color:#fff6dd;transform:scaleX(0.9321);">4,971,378</span>
<span class="t" id="t80" style="left:384.50px;top:860.10px;font-size:15.6px;font-weight:400;color:#6c757d;transform:scaleX(0.9807);">Previous</span>
<span class="t" id="t81" style="left:475.50px;top:860.10px;font-size:15.6px;font-weight:400;color:#fff;transform:scaleX(0.8633);">1</span>
<span class="t" id="t82" style="left:514.80px;top:860.10px;font-size:15.6px;font-weight:400;color:#2a7ae2;transform:scaleX(0.9899);">2</span>
<span class="t" id="t83" style="left:553.90px;top:860.10px;font-size:15.6px;font-weight:400;color:#2a7ae2;transform:scaleX(0.9899);">3</span>
<span class="t" id="t84" style="left:594.50px;top:860.10px;font-size:15.6px;font-weight:400;color:#2a7ae2;transform:scaleX(1.0194);">Next</span>
<div id="map"><svg width="588" height="500" viewBox="0 0 588 500" font-family="Liberation Sans, sans-serif">
<defs>
<clipPath id="land"><path d="M-58.0 170.4 L-29.6 172.0 L-6.8 173.6 L3.1 174.4 L20.2 172.0 L28.7 172.0 L36.5 173.6 L45.8 171.2 L60.0 168.9 L65.0 173.6 L65.7 179.1 L70.7 179.9 L74.2 186.1 L77.1 193.1 L84.2 196.2 L87.0 198.6 L90.6 201.7 L94.4 204.5 L98.4 208.2 L103.4 210.5 L108.6 210.3 L115.7 207.4 L119.7 207.9 L119.0 209.4 L116.9 212.5 L110.2 216.7 L106.9 218.6 L99.5 216.0 L98.0 219.6 L101.2 224.0 L106.9 228.8 L114.0 237.0 L117.9 240.1 L126.5 243.0 L132.2 240.5 L137.8 237.3 L142.5 235.5 L145.0 228.2 L143.9 226.3 L146.7 220.2 L149.6 218.6 L151.7 221.0 L148.6 227.9 L149.6 232.4 L150.0 237.0 L151.7 240.1 L152.8 247.7 L151.4 255.2 L151.3 262.8 L152.4 268.8 L152.7 270.3 L153.8 274.8 L154.7 279.3 L156.0 286.8 L159.2 298.7 L161.7 307.6 L161.8 312.8 L164.1 315.6 L166.6 320.9 L168.8 328.3 L171.2 331.2 L175.2 340.1 L178.0 348.9 L179.4 352.5 L181.3 359.5 L183.7 364.9 L188.7 374.1 L194.6 383.1 L196.8 389.9 L199.3 396.8 L201.2 401.7 L202.5 408.4 L206.2 417.3 L211.1 423.1 L216.4 427.8 L220.0 428.8 L223.5 427.1 L228.2 422.8 L228.8 418.5 L232.0 414.1 L239.2 412.0 L244.8 412.0 L241.3 409.8 L240.9 404.9 L246.0 396.4 L252.8 397.0 L252.7 390.0 L252.5 387.9 L251.5 375.8 L252.5 373.2 L257.6 363.2 L258.9 356.5 L259.5 351.0 L258.4 347.4 L256.5 343.0 L256.9 335.7 L255.5 328.3 L256.2 320.9 L260.5 316.5 L264.3 315.5 L267.6 317.5 L271.9 314.3 L271.9 310.9 L276.1 308.4 L279.0 308.7 L287.5 305.4 L287.5 299.5 L291.8 295.0 L301.7 288.3 L303.9 285.3 L313.1 279.3 L320.2 271.8 L324.5 265.0 L331.6 259.0 L337.7 256.7 L341.5 255.5 L350.1 249.6 L351.5 246.1 L354.3 242.3 L352.9 237.0 L354.8 231.7 L360.0 229.4 L367.1 227.1 L370.0 228.6 L375.7 229.4 L384.2 228.6 L391.3 227.1 L397.0 225.6 L402.0 224.8 L405.5 221.7 L407.0 217.1 L409.8 214.8 L412.6 216.3 L416.9 214.0 L422.6 218.6 L424.7 227.1 L425.4 232.0 L429.7 240.8 L430.4 243.1 L438.2 251.5 L442.5 255.2 L447.5 262.0 L450.3 268.8 L455.3 271.1 L457.2 271.1 L458.6 277.1 L460.3 285.3 L462.1 289.8 L461.0 298.7 L458.1 307.6 L456.7 313.1 L459.6 315.8 L464.5 316.5 L469.5 317.2 L475.2 317.2 L480.9 315.0 L485.9 312.1 L487.3 306.9 L492.3 300.2 L495.8 293.5 L498.7 298.7 L505.1 306.9 L505.1 313.5 L507.9 324.6 L510.8 332.7 L512.2 343.0 L516.4 353.2 L519.3 365.6 L520.7 375.1 L521.4 386.7 L519.3 396.8 L518.6 401.2 L517.2 409.8 L515.0 417.0 L514.3 421.3 L514.7 427.1 L515.0 433.1 L517.2 430.0 L518.6 424.9 L523.6 429.2 L526.4 435.7 L530.7 441.4 L534.9 446.5 L539.9 450.7 L541.3 455.8 L543.5 458.6 L544.2 467.2 L544.9 472.9 L547.7 478.6 L548.4 485.7 L550.6 490.0 L553.4 494.3 L557.7 498.6 L559.1 504.3 L564.8 511.4 L596.1 511.4 L589.0 501.4 L588.3 487.2 L587.5 475.8 L584.0 467.9 L576.2 461.5 L571.2 455.8 L564.8 452.2 L557.7 445.7 L552.0 445.0 L547.7 441.4 L544.9 432.8 L540.6 424.2 L539.2 417.0 L537.8 411.3 L530.7 412.0 L527.8 405.5 L527.8 394.7 L532.1 386.7 L536.4 375.1 L538.8 364.2 L539.9 356.2 L543.5 351.0 L547.7 350.3 L552.7 351.8 L551.7 359.1 L552.0 363.5 L557.7 362.7 L564.8 362.0 L569.1 364.9 L575.5 370.7 L580.4 376.5 L581.9 380.9 L583.3 386.7 L589.0 392.5 L610.3 393.9 L610.3 -40.9 L-58.0 -40.9 Z"/><path d="M257.6 403.6 L253.4 404.8 L255.5 409.8 L253.4 415.6 L252.0 430.0 L252.7 445.3 L254.8 454.3 L257.6 458.2 L263.3 459.8 L270.4 456.9 L279.0 451.5 L281.1 444.3 L279.0 434.3 L271.9 421.3 L266.2 412.0 Z"/><path d="M470.9 465.1 L473.8 463.6 L480.9 466.5 L486.6 469.3 L495.1 468.9 L499.4 470.0 L503.7 469.3 L509.3 474.3 L514.3 480.8 L515.0 485.7 L520.7 490.0 L525.0 494.3 L533.5 498.6 L539.2 504.3 L544.9 511.4 L507.9 511.4 L506.5 510.0 L502.2 502.1 L499.4 497.9 L495.1 492.9 L489.4 490.7 L485.2 485.7 L480.9 482.2 L473.8 474.3 L470.9 467.2 Z"/><path d="M438.9 349.6 L440.4 354.7 L439.4 363.5 L436.8 372.2 L436.1 378.7 L434.0 378.0 L434.7 369.3 L436.8 359.1 L437.5 351.0 Z"/></clipPath>
<filter id="b2" x="-10%" y="-10%" width="120%" height="120%"><feGaussianBlur stdDeviation="2.2"/></filter>
<filter id="b4" x="-10%" y="-10%" width="120%" height="120%"><feGaussianBlur stdDeviation="4.5"/></filter>
<filter id="b1" x="-10%" y="-10%" width="120%" height="120%"><feGaussianBlur stdDeviation="1"/></filter>
</defs>
<rect width="588" height="500" fill="#6bd0e8"/>
<rect x="77.2" y="0" width="1" height="500" fill="#86d8ec" opacity=".8"/>
<g clip-path="url(#land)">
<rect width="588" height="500" fill="#b1e5d0"/>
<polygon points="-11.2,-11.2 134.1,-11.2 134.6,0.0 129.6,25.0 133.0,42.1 134.6,67.0 131.3,84.2 117.8,101.0 101.0,117.8 84.2,131.0 79.1,150.1 79.1,162.7 71.5,179.5 56.1,179.5 -11.2,182.3" fill="#faf8f2" opacity="1" filter="url(#b4)"/>
<polygon points="106.6,5.6 120.6,11.2 117.8,33.7 110.8,56.1 103.8,53.3 108.0,28.1" fill="#cdeedd" opacity="0.8" filter="url(#b2)"/>
<polygon points="121.2,50.5 126.8,50.5 125.1,84.2 120.1,87.0" fill="#bfe9d6" opacity="0.9" filter="url(#b1)"/>
<polygon points="112.2,134.1 131.8,131.8 152.9,115.6 168.3,98.7 190.7,104.3 213.2,112.8 222.2,131.8 214.3,151.5 224.4,168.3 213.7,185.1 196.4,193.5 179.5,208.1 157.1,222.2 134.6,219.4 120.6,205.3 94.0,196.9 98.7,171.7 101.5,157.1 111.1,145.9" fill="#faf8f2" opacity="0.95" filter="url(#b4)"/>
<polygon points="84.2,196.4 131.8,193.5 145.9,213.2 140.3,241.2 117.8,241.2 95.4,218.8" fill="#e6f1e2" opacity="0.8" filter="url(#b4)"/>
<polygon points="157.1,-11.2 308.6,-11.2 308.6,96.8 280.5,94.0 263.7,84.2 246.8,70.1 230.0,53.3 213.2,36.5 196.4,19.6 179.5,8.4" fill="#faf8f2" opacity="1" filter="url(#b4)"/>
<polygon points="140.3,-5.6 157.1,-5.6 179.5,16.8 196.4,33.7 213.2,50.5 232.8,68.7 252.5,84.2 269.3,95.4 297.3,106.6 297.3,120.6 269.3,112.2 246.8,101.0 224.4,84.2 204.8,67.3 185.1,50.5 168.3,36.5 151.5,22.4" fill="#a3dec2" opacity="0.75" filter="url(#b2)"/>
<polygon points="179.5,5.6 196.4,16.8 213.2,33.7 230.0,50.5 246.8,67.3 263.7,81.3 260.9,87.0 244.0,75.7 224.4,58.9 207.6,42.1 190.7,25.2 176.7,14.0" fill="#fdfcfa" opacity="0.85" filter="url(#b2)"/>
<polygon points="196.4,42.1 221.6,47.7 232.8,64.5 218.8,67.3 202.0,56.1" fill="#fdfcfa" opacity="0.8" filter="url(#b2)"/>
<polygon points="277.2,-11.2 473.5,-11.2 456.7,22.4 444.1,44.9 455.3,70.1 444.1,92.6 428.6,112.2 406.2,121.2 378.2,124.5 350.1,126.8 327.7,118.9 294.0,102.4 277.2,95.4" fill="#faf8f2" opacity="1" filter="url(#b4)"/>
<polygon points="451.1,-11.2 596.9,-11.2 596.9,8.4 546.5,12.6 515.6,15.4 501.6,36.5 479.1,47.7 445.5,51.9 434.3,33.7" fill="#faf8f2" opacity="0.95" filter="url(#b4)"/>
<polygon points="310.8,16.8 378.2,11.2 411.8,33.7 400.6,61.7 350.1,67.3 310.8,50.5" fill="#fdfcfa" opacity="0.6" filter="url(#b4)"/>
<polygon points="378.2,84.2 414.6,78.5 425.8,101.0 400.6,115.0 375.3,106.6" fill="#efe9da" opacity="0.8" filter="url(#b2)"/>
<polygon points="439.9,50.5 462.3,42.1 484.7,56.1 473.5,70.1 451.1,67.3" fill="#fdfcfa" opacity="0.8" filter="url(#b2)"/>
<polygon points="462.3,72.9 490.4,70.1 507.2,89.8 496.0,112.2 473.5,106.6 462.3,89.8" fill="#fdfcfa" opacity="0.8" filter="url(#b2)"/>
<polygon points="490.4,47.7 512.8,53.3 507.2,70.1 490.4,64.5" fill="#fdfcfa" opacity="0.8" filter="url(#b2)"/>
<polygon points="439.9,92.6 462.3,95.4 467.9,112.2 445.5,117.8" fill="#fdfcfa" opacity="0.8" filter="url(#b2)"/>
<polygon points="515.6,84.2 526.8,85.6 528.2,95.4 517.0,96.8" fill="#f3ead9" opacity="0.9" filter="url(#b1)"/>
<polygon points="538.0,103.8 547.9,105.2 546.5,115.0 537.5,113.6" fill="#f3ead9" opacity="0.9" filter="url(#b1)"/>
<polygon points="494.6,51.9 504.4,50.5 505.8,57.5 496.0,58.9" fill="#f3ead9" opacity="0.9" filter="url(#b1)"/>
<polygon points="557.1,134.6 565.5,134.6 565.5,140.3 557.1,140.3" fill="#f3ead9" opacity="0.9" filter="url(#b1)"/>
<polygon points="282.8,101.0 310.8,106.6 333.3,123.4 372.5,131.8 406.2,129.6 428.6,123.4 462.3,117.8 490.4,110.8 507.2,117.8 490.4,131.8 451.1,145.9 411.8,151.5 378.2,145.9 338.9,140.3 305.2,131.8 282.8,117.8" fill="#a0ddc0" opacity="0.8" filter="url(#b2)"/>
<polygon points="434.3,123.4 490.4,112.2 524.0,123.4 532.4,168.3 526.8,213.2 507.2,258.1 445.5,258.1 451.1,216.0 462.3,179.5 442.7,168.3 428.6,145.9" fill="#9bdabb" opacity="0.9" filter="url(#b4)"/>
<polygon points="462.3,131.8 507.2,131.8 518.4,179.5 496.0,230.0 467.9,224.4 473.5,179.5" fill="#8fd4b2" opacity="0.7" filter="url(#b4)"/>
<polygon points="364.1,157.1 417.4,157.1 439.9,179.5 428.6,224.4 386.6,230.0 364.1,196.4" fill="#c9eedd" opacity="0.7" filter="url(#b4)"/>
<polygon points="310.8,179.5 338.9,185.1 350.1,202.0 327.7,218.8 299.6,207.6" fill="#e3f1e3" opacity="0.8" filter="url(#b2)"/>
<polygon points="299.6,218.8 327.7,224.4 333.3,241.2 310.8,249.9 294.0,241.2" fill="#d9efe0" opacity="0.8" filter="url(#b2)"/>
<polygon points="241.2,168.3 269.3,157.1 291.7,168.3 280.5,190.7 252.5,193.5" fill="#dff0e2" opacity="0.7" filter="url(#b2)"/>
<polygon points="179.5,213.2 207.6,207.6 224.4,224.4 213.2,246.8 185.1,241.2" fill="#d5eedf" opacity="0.7" filter="url(#b2)"/>
<polygon points="168.3,261.2 196.4,266.8 216.0,292.1 227.2,320.1 241.2,342.6 253.9,367.8 248.2,390.3 234.2,395.9 224.4,376.2 213.7,356.6 196.4,334.2 179.5,306.1 168.3,283.7" fill="#efefe0" opacity="0.9" filter="url(#b4)"/>
<polygon points="179.5,278.1 202.0,286.5 213.2,314.5 196.4,317.3 182.3,297.7" fill="#faf8f2" opacity="0.8" filter="url(#b2)"/>
<polygon points="218.8,334.2 238.4,342.6 246.8,370.6 232.8,373.4 221.6,356.6" fill="#faf8f2" opacity="0.8" filter="url(#b2)"/>
<polygon points="224.4,384.6 244.0,390.3 241.2,407.1 224.4,401.5" fill="#faf8f2" opacity="0.7" filter="url(#b2)"/>
<polygon points="151.5,244.4 168.3,244.4 179.5,289.3 193.5,334.2 207.6,373.4 221.6,407.1 224.4,429.5 216.0,429.5 202.0,395.9 185.1,356.6 171.1,317.3 159.9,283.7" fill="#9bdabb" opacity="0.8" filter="url(#b2)"/>
<polygon points="252.5,238.8 297.3,238.8 297.3,266.8 274.9,289.3 252.5,283.7" fill="#a6dfc4" opacity="0.7" filter="url(#b2)"/>
<polygon points="255.3,407.1 274.9,418.3 280.5,446.4 263.7,457.6 252.5,435.1" fill="#a6dfc4" opacity="0.6" filter="url(#b2)"/>
<polygon points="434.3,238.8 602.6,238.8 602.6,499.9 507.2,499.9 518.4,418.3 512.8,362.2 490.4,322.9 473.5,317.3 451.1,283.7" fill="#9bdabb" opacity="0.5" filter="url(#b4)"/>
<polygon points="467.9,261.2 490.4,266.8 496.0,306.1 479.1,311.7 467.9,289.3" fill="#e4f0e0" opacity="0.7" filter="url(#b2)"/>
<polygon points="535.2,292.1 591.3,286.5 591.3,342.6 557.7,345.4 538.0,322.9" fill="#c6ecda" opacity="0.8" filter="url(#b2)"/>
<polygon points="524.0,255.6 546.5,250.0 552.1,283.7 535.2,294.9 521.2,278.1" fill="#8fd4b2" opacity="0.7" filter="url(#b2)"/>
<polygon points="554.9,266.8 591.3,261.2 591.3,289.3 563.3,292.1" fill="#8fd4b2" opacity="0.6" filter="url(#b2)"/>
<ellipse cx="247.1" cy="173.6" rx="9" ry="6" fill="#f1efe1" opacity="0.9" transform="rotate(0 247.1 173.6)" filter="url(#b1)"/>
<ellipse cx="297.6" cy="207.2" rx="10" ry="7" fill="#f1efe1" opacity="0.9" transform="rotate(0 297.6 207.2)" filter="url(#b1)"/>
<ellipse cx="285.9" cy="230.8" rx="7" ry="6" fill="#f1efe1" opacity="0.9" transform="rotate(0 285.9 230.8)" filter="url(#b1)"/>
<ellipse cx="213.5" cy="247.6" rx="9" ry="5" fill="#f1efe1" opacity="0.9" transform="rotate(0 213.5 247.6)" filter="url(#b1)"/>
<ellipse cx="351.5" cy="187.0" rx="9" ry="5" fill="#f1efe1" opacity="0.9" transform="rotate(0 351.5 187.0)" filter="url(#b1)"/>
<ellipse cx="328.0" cy="207.0" rx="6" ry="4" fill="#f1efe1" opacity="0.9" transform="rotate(0 328.0 207.0)" filter="url(#b1)"/>
<ellipse cx="206.7" cy="225.8" rx="7" ry="4" fill="#f1efe1" opacity="0.9" transform="rotate(0 206.7 225.8)" filter="url(#b1)"/>
<ellipse cx="262.0" cy="189.0" rx="6" ry="4" fill="#f1efe1" opacity="0.9" transform="rotate(0 262.0 189.0)" filter="url(#b1)"/>
<ellipse cx="302.0" cy="181.0" rx="7" ry="3" fill="#f1efe1" opacity="0.9" transform="rotate(0 302.0 181.0)" filter="url(#b1)"/>
<ellipse cx="222.0" cy="279.0" rx="8" ry="5" fill="#f1efe1" opacity="0.9" transform="rotate(0 222.0 279.0)" filter="url(#b1)"/>
<ellipse cx="242.0" cy="309.0" rx="6" ry="8" fill="#f1efe1" opacity="0.9" transform="rotate(0 242.0 309.0)" filter="url(#b1)"/>
<ellipse cx="207.0" cy="304.0" rx="5" ry="7" fill="#f1efe1" opacity="0.9" transform="rotate(0 207.0 304.0)" filter="url(#b1)"/>
<ellipse cx="230.0" cy="359.0" rx="6" ry="5" fill="#f1efe1" opacity="0.9" transform="rotate(0 230.0 359.0)" filter="url(#b1)"/>
<ellipse cx="244.0" cy="399.0" rx="6" ry="5" fill="#f1efe1" opacity="0.9" transform="rotate(0 244.0 399.0)" filter="url(#b1)"/>
<ellipse cx="197.0" cy="329.0" rx="4" ry="6" fill="#f1efe1" opacity="0.9" transform="rotate(0 197.0 329.0)" filter="url(#b1)"/>
<ellipse cx="272.0" cy="249.0" rx="6" ry="4" fill="#f1efe1" opacity="0.9" transform="rotate(0 272.0 249.0)" filter="url(#b1)"/>
<ellipse cx="312.0" cy="239.0" rx="5" ry="4" fill="#f1efe1" opacity="0.9" transform="rotate(0 312.0 239.0)" filter="url(#b1)"/>
<ellipse cx="489.6" cy="303.9" rx="4" ry="3" fill="#f1efe1" opacity="0.9" transform="rotate(0 489.6 303.9)" filter="url(#b1)"/>
<ellipse cx="577.0" cy="304.0" rx="9" ry="4" fill="#f1efe1" opacity="0.9" transform="rotate(0 577.0 304.0)" filter="url(#b1)"/>
<ellipse cx="574.0" cy="331.0" rx="7" ry="3" fill="#f1efe1" opacity="0.9" transform="rotate(0 574.0 331.0)" filter="url(#b1)"/>
<ellipse cx="467.0" cy="189.0" rx="3" ry="9" fill="#f1efe1" opacity="0.9" transform="rotate(0 467.0 189.0)" filter="url(#b1)"/>
<ellipse cx="473.9" cy="256.7" rx="3" ry="5" fill="#f1efe1" opacity="0.9" transform="rotate(0 473.9 256.7)" filter="url(#b1)"/>
<polygon points="468.8,197.1 489.0,193.8 495.7,217.3 492.4,251.0 482.3,277.9 492.4,300.0 465.4,300.0 463.8,267.8 458.7,234.2 462.1,208.9" fill="#b6e6d1" opacity="0.85" filter="url(#b2)"/>
<ellipse cx="22.0" cy="19.0" rx="14" ry="2.5" fill="#ffffff" opacity="0.7" transform="rotate(-25 22.0 19.0)" filter="url(#b1)"/>
<ellipse cx="47.0" cy="49.0" rx="12" ry="2" fill="#ffffff" opacity="0.7" transform="rotate(-20 47.0 49.0)" filter="url(#b1)"/>
<ellipse cx="82.0" cy="19.0" rx="10" ry="2" fill="#ffffff" opacity="0.7" transform="rotate(-30 82.0 19.0)" filter="url(#b1)"/>
<ellipse cx="27.0" cy="79.0" rx="12" ry="2" fill="#ffffff" opacity="0.7" transform="rotate(-15 27.0 79.0)" filter="url(#b1)"/>
<ellipse cx="62.0" cy="139.0" rx="12" ry="2" fill="#ffffff" opacity="0.7" transform="rotate(-20 62.0 139.0)" filter="url(#b1)"/>
<ellipse cx="27.0" cy="159.0" rx="10" ry="2" fill="#ffffff" opacity="0.7" transform="rotate(-10 27.0 159.0)" filter="url(#b1)"/>
<ellipse cx="97.0" cy="64.0" rx="9" ry="2" fill="#ffffff" opacity="0.7" transform="rotate(-50 97.0 64.0)" filter="url(#b1)"/>
<ellipse cx="82.0" cy="99.0" rx="10" ry="2" fill="#ffffff" opacity="0.7" transform="rotate(-35 82.0 99.0)" filter="url(#b1)"/>
<ellipse cx="322.0" cy="19.0" rx="16" ry="3" fill="#ffffff" opacity="0.7" transform="rotate(10 322.0 19.0)" filter="url(#b1)"/>
<ellipse cx="372.0" cy="49.0" rx="14" ry="3" fill="#ffffff" opacity="0.7" transform="rotate(-10 372.0 49.0)" filter="url(#b1)"/>
<ellipse cx="302.0" cy="59.0" rx="12" ry="2.5" fill="#ffffff" opacity="0.7" transform="rotate(15 302.0 59.0)" filter="url(#b1)"/>
<ellipse cx="352.0" cy="104.0" rx="14" ry="3" fill="#ffffff" opacity="0.7" transform="rotate(-15 352.0 104.0)" filter="url(#b1)"/>
<ellipse cx="412.0" cy="19.0" rx="12" ry="3" fill="#ffffff" opacity="0.7" transform="rotate(20 412.0 19.0)" filter="url(#b1)"/>
<ellipse cx="272.0" cy="19.0" rx="10" ry="2.5" fill="#ffffff" opacity="0.7" transform="rotate(-30 272.0 19.0)" filter="url(#b1)"/>
<ellipse cx="37.0" cy="34.0" rx="12" ry="2" fill="#ece6d8" opacity="0.7" transform="rotate(-25 37.0 34.0)" filter="url(#b1)"/>
<ellipse cx="72.0" cy="69.0" rx="10" ry="2" fill="#ece6d8" opacity="0.7" transform="rotate(-30 72.0 69.0)" filter="url(#b1)"/>
<ellipse cx="42.0" cy="114.0" rx="12" ry="2" fill="#ece6d8" opacity="0.7" transform="rotate(-15 42.0 114.0)" filter="url(#b1)"/>
<ellipse cx="337.0" cy="34.0" rx="14" ry="2.5" fill="#ece6d8" opacity="0.7" transform="rotate(10 337.0 34.0)" filter="url(#b1)"/>
<ellipse cx="387.0" cy="69.0" rx="12" ry="2.5" fill="#ece6d8" opacity="0.7" transform="rotate(-10 387.0 69.0)" filter="url(#b1)"/>
<ellipse cx="317.0" cy="84.0" rx="12" ry="2" fill="#ece6d8" opacity="0.7" transform="rotate(15 317.0 84.0)" filter="url(#b1)"/>
<polyline points="400.6,161.3 420.2,157.1 439.9,152.9 456.7,145.9 473.5,134.6" fill="none" stroke="#7fd0ea" stroke-width="2.2" opacity="0.9" stroke-linejoin="round" stroke-linecap="round"/>
<polyline points="400.6,161.3 406.2,179.5 414.6,196.4 420.2,213.2" fill="none" stroke="#7fd0ea" stroke-width="1.6" opacity="0.9" stroke-linejoin="round" stroke-linecap="round"/>
<polyline points="316.4,165.5 333.3,168.3 350.1,179.5 366.9,193.5 386.6,202.0 414.6,213.2" fill="none" stroke="#7fd0ea" stroke-width="1.2" opacity="0.9" stroke-linejoin="round" stroke-linecap="round"/>
<polyline points="131.8,183.7 129.6,188.5" fill="none" stroke="#7fd0ea" stroke-width="3" opacity="0.9" stroke-linejoin="round" stroke-linecap="round"/>
<polyline points="145.9,223.0 148.1,235.6" fill="none" stroke="#7fd0ea" stroke-width="2.4" opacity="0.9" stroke-linejoin="round" stroke-linecap="round"/>
<polyline points="127.6,70.1 123.4,92.6 117.8,112.2" fill="none" stroke="#8fd6ea" stroke-width="0.9" opacity="0.7" stroke-linejoin="round" stroke-linecap="round"/>
<ellipse cx="384.6" cy="67.0" rx="3.6" ry="2.0" fill="#6fcbe6"/>
<ellipse cx="406.2" cy="85.0" rx="4.2" ry="2.2" fill="#6fcbe6"/>
<ellipse cx="336.4" cy="81.3" rx="3.1" ry="1.4" fill="#6fcbe6"/>
<ellipse cx="369.7" cy="68.4" rx="2.2" ry="1.1" fill="#6fcbe6"/>
<ellipse cx="300.7" cy="72.7" rx="3.4" ry="1.1" fill="#6fcbe6"/>
<ellipse cx="312.8" cy="76.6" rx="2.0" ry="1.4" fill="#6fcbe6"/>
<ellipse cx="352.9" cy="79.1" rx="1.4" ry="1.1" fill="#6fcbe6"/>
<ellipse cx="508.0" cy="14.0" rx="2.2" ry="1.4" fill="#6fcbe6"/>
<ellipse cx="15.4" cy="125.7" rx="4.2" ry="3.6" fill="#6fcbe6"/>
<ellipse cx="40.7" cy="108.6" rx="1.4" ry="2.0" fill="#6fcbe6"/>
<ellipse cx="3.9" cy="99.3" rx="1.1" ry="1.1" fill="#6fcbe6"/>
<rect x="523" y="0" width="65" height="500" fill="#fff" opacity=".16"/>
</g>
<path d="M105.5 187.7 L126.8 181.4 L148.2 184.6 L172.3 179.9 L173.7 203.2 L169.5 220.2 L166.6 230.9 L168.1 246.1 L153.8 250.7" fill="none" stroke="#6f9f8a" stroke-width=".8" stroke-dasharray="2.2 2" opacity=".7"/>
<path d="M172.3 179.9 L196.5 176.7 L210.7 162.6 L229.2 146.7 L219.2 130.7 L210.7 122.6 L189.4 108.0 L173.7 98.2 L168.1 96.5" fill="none" stroke="#6f9f8a" stroke-width=".8" stroke-dasharray="2.2 2" opacity=".7"/>
<path d="M219.2 130.7 L215.0 114.5 L215.0 91.6 L210.7 81.7 L196.5 56.6" fill="none" stroke="#6f9f8a" stroke-width=".8" stroke-dasharray="2.2 2" opacity=".7"/>
<path d="M210.7 81.7 L223.5 76.7 L237.7 75.0" fill="none" stroke="#6f9f8a" stroke-width=".8" stroke-dasharray="2.2 2" opacity=".7"/>
<path d="M215.0 91.6 L226.4 103.1 L240.6 114.5 L255.5 115.3" fill="none" stroke="#6f9f8a" stroke-width=".8" stroke-dasharray="2.2 2" opacity=".7"/>
<path d="M229.2 146.7 L240.6 156.2 L232.0 170.4 L247.7 175.2 L269.0 176.7 L294.6 183.0 L304.6 184.6 L311.7 168.9 L321.6 141.9" fill="none" stroke="#6f9f8a" stroke-width=".8" stroke-dasharray="2.2 2" opacity=".7"/>
<path d="M304.6 184.6 L315.9 187.7 L337.3 184.6 L355.8 179.9 L365.7 173.6 L369.3 177.5" fill="none" stroke="#6f9f8a" stroke-width=".8" stroke-dasharray="2.2 2" opacity=".7"/>
<path d="M315.9 187.7 L310.3 198.6 L311.7 215.6 L327.3 221.7 L340.1 215.6 L352.9 221.7 L355.8 229.4" fill="none" stroke="#6f9f8a" stroke-width=".8" stroke-dasharray="2.2 2" opacity=".7"/>
<path d="M352.9 221.7 L347.2 207.9 L355.8 192.4 L355.8 179.9" fill="none" stroke="#6f9f8a" stroke-width=".8" stroke-dasharray="2.2 2" opacity=".7"/>
<path d="M294.6 183.0 L286.1 195.5 L269.0 215.6 L260.5 232.4 L263.3 249.2 L261.9 264.3 L269.0 286.8" fill="none" stroke="#6f9f8a" stroke-width=".8" stroke-dasharray="2.2 2" opacity=".7"/>
<path d="M311.7 215.6 L304.6 230.9 L288.9 241.6 L291.8 255.2 L280.4 273.3 L269.0 286.8 L287.5 283.8 L303.1 270.3 L321.6 267.3" fill="none" stroke="#6f9f8a" stroke-width=".8" stroke-dasharray="2.2 2" opacity=".7"/>
<path d="M168.1 246.1 L176.6 229.4 L200.8 234.0 L233.5 230.9 L260.5 232.4" fill="none" stroke="#6f9f8a" stroke-width=".8" stroke-dasharray="2.2 2" opacity=".7"/>
<path d="M261.9 264.3 L240.6 259.8 L226.4 264.3 L222.1 276.3 L219.2 289.8 L209.3 294.3 L196.5 298.7 L183.7 300.2 L173.7 316.5 L165.2 318.0" fill="none" stroke="#6f9f8a" stroke-width=".8" stroke-dasharray="2.2 2" opacity=".7"/>
<path d="M219.2 289.8 L217.8 307.6 L230.6 313.5 L243.4 310.6 L254.8 301.7 L260.5 291.3 L269.0 286.8" fill="none" stroke="#6f9f8a" stroke-width=".8" stroke-dasharray="2.2 2" opacity=".7"/>
<path d="M217.8 307.6 L209.3 323.9 L213.6 338.6 L226.4 348.9 L232.0 363.5 L222.1 369.3 L212.1 375.1 L200.8 373.6 L188.0 370.7" fill="none" stroke="#6f9f8a" stroke-width=".8" stroke-dasharray="2.2 2" opacity=".7"/>
<path d="M232.0 363.5 L244.8 353.2 L259.1 350.3" fill="none" stroke="#6f9f8a" stroke-width=".8" stroke-dasharray="2.2 2" opacity=".7"/>
<path d="M212.1 375.1 L207.9 388.1 L215.0 398.3 L215.0 415.6 L215.0 427.1" fill="none" stroke="#6f9f8a" stroke-width=".8" stroke-dasharray="2.2 2" opacity=".7"/>
<path d="M394.9 172.0 L395.6 159.4" fill="none" stroke="#6f9f8a" stroke-width=".8" stroke-dasharray="2.2 2" opacity=".7"/>
<path d="M425.4 173.6 L436.8 167.3 L445.3 159.4 L452.5 148.3 L470.9 150.7" fill="none" stroke="#6f9f8a" stroke-width=".8" stroke-dasharray="2.2 2" opacity=".7"/>
<path d="M445.3 192.4 L439.7 183.0 L431.8 177.5" fill="none" stroke="#6f9f8a" stroke-width=".8" stroke-dasharray="2.2 2" opacity=".7"/>
<path d="M445.3 159.4 L453.9 168.9 L462.4 173.6" fill="none" stroke="#6f9f8a" stroke-width=".8" stroke-dasharray="2.2 2" opacity=".7"/>
<path d="M436.8 167.3 L439.7 183.0" fill="none" stroke="#6f9f8a" stroke-width=".8" stroke-dasharray="2.2 2" opacity=".7"/>
<path d="M178.7 46.5 L169.5 43.1 L168.8 19.1 L173.7 16.5 L195.1 20.8 L212.1 12.2 L223.5 3.5" fill="none" stroke="#555" stroke-width=".9" stroke-dasharray="3 2.4" opacity=".85"/>
<path d="M182.3 -26.6 L195.1 -17.7 L209.3 -0.0 L223.5 3.5 L232.0 19.1 L240.6 24.3 L236.3 36.3 L246.3 53.2 L232.0 54.9" fill="none" stroke="#555" stroke-width=".9" stroke-dasharray="3 2.4" opacity=".85"/>
<path d="M223.5 3.5 L237.7 -3.5 L259.1 3.5 L257.6 19.1 L240.6 24.3" fill="none" stroke="#555" stroke-width=".9" stroke-dasharray="3 2.4" opacity=".85"/>
<path d="M426.9 132.3 L443.9 119.4 L458.1 110.4 L473.8 111.2 L485.2 106.3 L490.9 116.1 L501.5 125.0" fill="none" stroke="#555" stroke-width=".9" stroke-dasharray="3 2.4" opacity=".85"/>
<path d="M426.9 147.5 L451.0 145.9 L476.6 130.7 L495.1 141.9" fill="none" stroke="#555" stroke-width=".9" stroke-dasharray="3 2.4" opacity=".85"/>
<path d="M397.0 -10.6 L411.2 1.7 L439.7 29.4 L468.1 43.1 L496.5 53.2 L517.9 66.7 L525.0 96.5 L525.0 112.9 L520.7 137.1" fill="none" stroke="#555" stroke-width=".9" stroke-dasharray="3 2.4" opacity=".85"/>
<path d="M517.9 66.7 L539.2 49.9 L560.5 43.1 L574.8 31.1 L596.1 26.0" fill="none" stroke="#555" stroke-width=".9" stroke-dasharray="3 2.4" opacity=".85"/>
<path d="M525.0 112.9 L539.2 125.8 L549.2 135.5 L564.8 154.6 L579.0 156.2 L590.4 145.1 L596.1 135.5" fill="none" stroke="#555" stroke-width=".9" stroke-dasharray="3 2.4" opacity=".85"/>
<path d="M259.1 3.5 L290.4 -1.8 L325.9 -5.3 L368.6 -12.3 L397.0 -10.6" fill="none" stroke="#555" stroke-width=".9" stroke-dasharray="3 2.4" opacity=".85"/>
<path d="M-17.2 98.8 L-2.6 121.0 L10.2 125.0 L10.2 141.9 L17.3 141.9 L15.9 150.7 L3.1 154.6 L-3.3 157.8 L-6.8 173.6" fill="none" stroke="#3c3c3c" stroke-width="1" stroke-linejoin="round"/>
<path d="M-17.2 98.8 L6.0 106.3 L28.7 106.3 L41.5 103.9 L58.6 99.0 L61.4 81.7 L68.5 75.0 L81.3 74.2 L87.0 66.7 L97.0 70.0 L102.6 64.2 L105.5 44.8 L116.9 41.4 L111.2 29.4 L128.2 28.6 L128.2 22.5 L135.4 8.7 L129.7 -5.3 L148.2 -19.4 L166.6 -21.2 L182.3 -26.6" fill="none" stroke="#3c3c3c" stroke-width="1" stroke-linejoin="round"/>
<path d="M87.0 198.6 L94.8 187.7 L112.6 189.2 L128.2 186.1 L121.1 165.7 L114.0 162.6 L116.9 151.5 L105.5 148.3 L105.5 141.9 L118.3 129.0 L124.0 133.1 L139.6 129.9 L146.7 116.1 L155.3 109.6 L168.1 96.5 L168.8 93.2 L178.0 80.0 L176.6 68.4 L188.0 58.3 L179.4 54.9 L178.7 46.5" fill="none" stroke="#3c3c3c" stroke-width="1" stroke-linejoin="round"/>
<path d="M255.5 115.3 L260.5 99.8 L269.0 93.2 L274.7 89.9 L284.7 90.8 L310.3 108.0 L314.5 114.5 L327.3 118.5 L335.9 124.2 L340.1 130.7 L348.7 127.4 L357.2 131.5 L370.0 130.7 L371.4 138.7 L368.6 154.6 L358.6 154.6 L340.1 150.7 L328.7 149.1 L321.6 141.9 L301.7 139.5 L293.2 133.9 L280.4 130.7 L270.4 122.6 L255.5 115.3" fill="none" stroke="#3c3c3c" stroke-width="1" stroke-linejoin="round"/>
<path d="M232.0 54.9 L237.7 75.0 L249.1 81.7 L257.6 86.6 L269.0 93.2" fill="none" stroke="#3c3c3c" stroke-width="1" stroke-linejoin="round"/>
<path d="M370.0 130.7 L379.9 128.2 L381.4 140.3" fill="none" stroke="#3c3c3c" stroke-width="1" stroke-linejoin="round"/>
<path d="M381.4 140.3 L382.8 146.7 L394.2 149.9 L411.2 148.3 L426.9 147.5 L426.2 137.9 L419.8 132.3 L415.5 128.2 L402.7 127.4 L391.3 125.8 L382.8 135.5 L381.4 140.3" fill="none" stroke="#3c3c3c" stroke-width="1" stroke-linejoin="round"/>
<path d="M501.5 125.0 L496.5 133.9 L495.1 141.9 L485.2 140.3 L470.9 150.7 L469.5 161.0 L462.4 173.6 L463.8 183.0 L456.7 193.9 L445.3 192.4 L443.9 207.9 L441.1 220.2 L434.0 223.6 L434.0 234.0 L429.7 240.8" fill="none" stroke="#3c3c3c" stroke-width="1" stroke-linejoin="round"/>
<path d="M383.5 228.6 L382.1 218.6 L379.2 204.8 L377.1 198.6 L379.2 189.2 L370.0 183.0 L369.3 177.5 L375.0 173.6 L381.4 172.0 L374.2 164.1 L371.4 157.8 L376.4 153.8 L384.2 156.2 L393.4 157.8 L394.9 172.0 L402.7 174.4 L425.4 173.6 L431.8 177.5 L428.3 184.6 L424.7 186.9 L419.8 190.8 L414.1 196.2 L413.4 204.8 L417.6 207.9 L422.6 204.0 L425.4 197.8 L429.7 203.2 L430.4 209.4 L434.0 223.6" fill="none" stroke="#3c3c3c" stroke-width="1" stroke-linejoin="round"/>
<path d="M501.5 125.0 L505.1 121.0 L512.2 135.5 L520.7 137.1 L520.7 161.0 L506.5 176.7 L504.4 186.1 L506.5 193.9 L520.7 190.8 L523.6 204.8 L532.1 209.4 L527.8 221.7 L540.6 230.9 L555.6 230.1" fill="none" stroke="#3c3c3c" stroke-width="1" stroke-linejoin="round"/>
<path d="M555.6 230.1 L555.6 237.0 L547.7 247.7 L540.6 248.4" fill="none" stroke="#3c3c3c" stroke-width="1" stroke-linejoin="round"/>
<path d="M540.6 248.4 L532.1 248.4 L525.0 256.7 L510.8 256.7 L507.2 274.8 L501.5 275.6 L507.9 289.8 L517.9 301.7 L519.3 312.8 L513.6 325.4 L519.3 337.1 L526.4 345.9 L527.8 363.5 L533.5 375.1 L525.0 388.1 L522.1 398.3 L519.3 401.5" fill="none" stroke="#3c3c3c" stroke-width="1" stroke-linejoin="round"/>
<path d="M540.6 248.4 L547.0 251.5 L546.3 261.3 L556.3 261.3 L553.4 283.8 L554.8 291.3 L569.1 280.8 L577.6 286.0 L587.5 277.8 L596.1 280.8" fill="none" stroke="#3c3c3c" stroke-width="1" stroke-linejoin="round"/>
<path d="M555.6 230.1 L564.1 236.3 L564.8 215.6 L570.5 217.1 L581.9 215.6 L596.1 211.0" fill="none" stroke="#3c3c3c" stroke-width="1" stroke-linejoin="round"/>
<path d="M580.4 377.3 L574.8 362.0 L575.5 348.9 L581.9 339.3 L596.1 337.1" fill="none" stroke="#3c3c3c" stroke-width="1" stroke-linejoin="round"/>
<path d="M540.6 452.2 L550.6 454.3 L554.8 462.9 L564.8 461.5 L569.1 455.0" fill="none" stroke="#3c3c3c" stroke-width="1" stroke-linejoin="round"/>
<path d="M102.6 -24.8 L115.4 -39.1" fill="none" stroke="#3c3c3c" stroke-width="1" stroke-linejoin="round"/>
<polyline points="0,5 4.2,10.1 10.1,8 16,4.2 17.7,0" fill="none" stroke="#3c3c3c" stroke-width="1"/>
<text x="-2.2" y="374.0" font-size="13.7" font-weight="400" fill="#3a8faa" textLength="70.9" lengthAdjust="spacingAndGlyphs">Arabian Sea</text>
<text x="182.9" y="460.4" font-size="13.7" font-weight="400" fill="#3a8faa" textLength="86.9" lengthAdjust="spacingAndGlyphs">Laccadive Sea</text>
<text x="321.5" y="355.2" font-size="13.7" font-weight="400" fill="#3a8faa" textLength="83.3" lengthAdjust="spacingAndGlyphs">Bay of Bengal</text>
<text x="437.1" y="387.4" font-size="13.7" font-weight="400" fill="#3a8faa" textLength="84.1" lengthAdjust="spacingAndGlyphs">Andaman Sea</text>
<text x="538.6" y="403.7" font-size="13.7" font-weight="400" fill="#3a8faa" textLength="41.0" lengthAdjust="spacingAndGlyphs">Gulf of</text>
<text x="533.8" y="416.9" font-size="13.7" font-weight="400" fill="#3a8faa" textLength="51.4" lengthAdjust="spacingAndGlyphs">Thailand</text>
<text x="466.5" y="2.6" font-size="10.4" font-weight="700" fill="#70757a" textLength="51.9" lengthAdjust="spacingAndGlyphs" stroke="#fff" stroke-width="2.2" stroke-linejoin="round" paint-order="stroke" stroke-opacity=".9">QINGHAI</text>
<text x="363.6" y="81.3" font-size="10.4" font-weight="700" fill="#70757a" textLength="33.6" lengthAdjust="spacingAndGlyphs" stroke="#fff" stroke-width="2.2" stroke-linejoin="round" paint-order="stroke" stroke-opacity=".9">TIBET</text>
<text x="548.7" y="97.6" font-size="10.4" font-weight="700" fill="#70757a" textLength="47.3" lengthAdjust="spacingAndGlyphs" stroke="#fff" stroke-width="2.2" stroke-linejoin="round" paint-order="stroke" stroke-opacity=".9">SICHUAN</text>
<text x="536.6" y="193.0" font-size="10.4" font-weight="700" fill="#70757a" textLength="50.5" lengthAdjust="spacingAndGlyphs" stroke="#fff" stroke-width="2.2" stroke-linejoin="round" paint-order="stroke" stroke-opacity=".9">YUNNAN</text>
<text x="209.8" y="23.0" font-size="10.6" font-weight="700" fill="#666d75" textLength="14.6" lengthAdjust="spacingAndGlyphs" stroke="#fff" stroke-width="2.4" stroke-linejoin="round" paint-order="stroke" stroke-opacity=".9">LA</text>
<text x="187.4" y="39.3" font-size="10.6" font-weight="700" fill="#666d75" textLength="14.0" lengthAdjust="spacingAndGlyphs" stroke="#fff" stroke-width="2.4" stroke-linejoin="round" paint-order="stroke" stroke-opacity=".9">JK</text>
<text x="204.8" y="65.9" font-size="10.6" font-weight="700" fill="#666d75" textLength="15.4" lengthAdjust="spacingAndGlyphs" stroke="#fff" stroke-width="2.4" stroke-linejoin="round" paint-order="stroke" stroke-opacity=".9">HP</text>
<text x="179.5" y="95.4" font-size="10.6" font-weight="700" fill="#666d75" textLength="14.0" lengthAdjust="spacingAndGlyphs" stroke="#fff" stroke-width="2.4" stroke-linejoin="round" paint-order="stroke" stroke-opacity=".9">PB</text>
<text x="235.0" y="99.6" font-size="10.6" font-weight="700" fill="#666d75" textLength="15.5" lengthAdjust="spacingAndGlyphs" stroke="#fff" stroke-width="2.4" stroke-linejoin="round" paint-order="stroke" stroke-opacity=".9">UK</text>
<text x="193.0" y="114.4" font-size="10.6" font-weight="700" fill="#666d75" textLength="16.0" lengthAdjust="spacingAndGlyphs" stroke="#fff" stroke-width="2.4" stroke-linejoin="round" paint-order="stroke" stroke-opacity=".9">HR</text>
<text x="244.6" y="135.2" font-size="10.6" font-weight="700" fill="#666d75" textLength="15.7" lengthAdjust="spacingAndGlyphs" stroke="#fff" stroke-width="2.4" stroke-linejoin="round" paint-order="stroke" stroke-opacity=".9">UP</text>
<text x="157.6" y="152.9" font-size="10.6" font-weight="700" fill="#666d75" textLength="14.3" lengthAdjust="spacingAndGlyphs" stroke="#fff" stroke-width="2.4" stroke-linejoin="round" paint-order="stroke" stroke-opacity=".9">RJ</text>
<text x="119.2" y="209.8" font-size="10.6" font-weight="700" fill="#666d75" textLength="14.0" lengthAdjust="spacingAndGlyphs" stroke="#fff" stroke-width="2.4" stroke-linejoin="round" paint-order="stroke" stroke-opacity=".9">GJ</text>
<text x="278.5" y="224.4" font-size="10.6" font-weight="700" fill="#666d75" textLength="15.5" lengthAdjust="spacingAndGlyphs" stroke="#fff" stroke-width="2.4" stroke-linejoin="round" paint-order="stroke" stroke-opacity=".9">CG</text>
<text x="336.0" y="169.7" font-size="10.6" font-weight="700" fill="#666d75" textLength="15.5" lengthAdjust="spacingAndGlyphs" stroke="#fff" stroke-width="2.4" stroke-linejoin="round" paint-order="stroke" stroke-opacity=".9">BR</text>
<text x="428.6" y="157.1" font-size="10.6" font-weight="700" fill="#666d75" textLength="14.9" lengthAdjust="spacingAndGlyphs" stroke="#fff" stroke-width="2.4" stroke-linejoin="round" paint-order="stroke" stroke-opacity=".9">AS</text>
<text x="404.2" y="171.7" font-size="10.6" font-weight="700" fill="#666d75" textLength="16.0" lengthAdjust="spacingAndGlyphs" stroke="#fff" stroke-width="2.4" stroke-linejoin="round" paint-order="stroke" stroke-opacity=".9">ML</text>
<text x="456.1" y="165.5" font-size="10.6" font-weight="700" fill="#666d75" textLength="15.2" lengthAdjust="spacingAndGlyphs" stroke="#fff" stroke-width="2.4" stroke-linejoin="round" paint-order="stroke" stroke-opacity=".9">NL</text>
<text x="461.7" y="125.7" font-size="10.6" font-weight="700" fill="#666d75" textLength="14.6" lengthAdjust="spacingAndGlyphs" stroke="#fff" stroke-width="2.4" stroke-linejoin="round" paint-order="stroke" stroke-opacity=".9">AR</text>
<text x="322.0" y="201.4" font-size="10.6" font-weight="700" fill="#666d75" textLength="15.5" lengthAdjust="spacingAndGlyphs" stroke="#fff" stroke-width="2.4" stroke-linejoin="round" paint-order="stroke" stroke-opacity=".9">JH</text>
<text x="350.9" y="210.9" font-size="10.6" font-weight="700" fill="#666d75" textLength="16.6" lengthAdjust="spacingAndGlyphs" stroke="#fff" stroke-width="2.4" stroke-linejoin="round" paint-order="stroke" stroke-opacity=".9">WB</text>
<text x="429.2" y="217.4" font-size="10.6" font-weight="700" fill="#666d75" textLength="16.8" lengthAdjust="spacingAndGlyphs" stroke="#fff" stroke-width="2.4" stroke-linejoin="round" paint-order="stroke" stroke-opacity=".9">MZ</text>
<text x="309.4" y="251.0" font-size="10.6" font-weight="700" fill="#666d75" textLength="16.9" lengthAdjust="spacingAndGlyphs" stroke="#fff" stroke-width="2.4" stroke-linejoin="round" paint-order="stroke" stroke-opacity=".9">OD</text>
<text x="159.3" y="328.5" font-size="10.6" font-weight="700" fill="#666d75" textLength="15.2" lengthAdjust="spacingAndGlyphs" stroke="#fff" stroke-width="2.4" stroke-linejoin="round" paint-order="stroke" stroke-opacity=".9">GA</text>
<text x="187.0" y="337.0" font-size="10.6" font-weight="700" fill="#666d75" textLength="15.5" lengthAdjust="spacingAndGlyphs" stroke="#fff" stroke-width="2.4" stroke-linejoin="round" paint-order="stroke" stroke-opacity=".9">KA</text>
<text x="235.0" y="334.2" font-size="10.6" font-weight="700" fill="#666d75" textLength="14.6" lengthAdjust="spacingAndGlyphs" stroke="#fff" stroke-width="2.4" stroke-linejoin="round" paint-order="stroke" stroke-opacity=".9">AP</text>
<text x="231.4" y="382.4" font-size="10.6" font-weight="700" fill="#666d75" textLength="14.9" lengthAdjust="spacingAndGlyphs" stroke="#fff" stroke-width="2.4" stroke-linejoin="round" paint-order="stroke" stroke-opacity=".9">TN</text>
<text x="202.5" y="414.7" font-size="10.6" font-weight="700" fill="#666d75" textLength="14.0" lengthAdjust="spacingAndGlyphs" stroke="#fff" stroke-width="2.4" stroke-linejoin="round" paint-order="stroke" stroke-opacity=".9">KL</text>
<text x="175.3" y="165.5" font-size="13.7" font-weight="400" fill="#26282b" textLength="42.1" lengthAdjust="spacingAndGlyphs" stroke="#fff" stroke-width="2.6" stroke-linejoin="round" paint-order="stroke" stroke-opacity=".9">Jaipur</text>
<text x="177.3" y="180.5" font-size="15.5" font-weight="700" fill="#262626" textLength="38.1" lengthAdjust="spacingAndGlyphs" stroke="#fff" stroke-width="2.6" stroke-linejoin="round" paint-order="stroke" stroke-opacity=".9">uqyj</text>
<text x="126.8" y="246.3" font-size="14" font-weight="400" fill="#26282b" textLength="54.1" lengthAdjust="spacingAndGlyphs" stroke="#fff" stroke-width="2.6" stroke-linejoin="round" paint-order="stroke" stroke-opacity=".9">Mumbai</text>
<text x="141.7" y="262.0" font-size="15.5" font-weight="700" fill="#262626" textLength="26.0" lengthAdjust="spacingAndGlyphs" stroke="#fff" stroke-width="2.6" stroke-linejoin="round" paint-order="stroke" stroke-opacity=".9">gjoS</text>
<text x="198.6" y="271.9" font-size="14" font-weight="400" fill="#26282b" textLength="72.1" lengthAdjust="spacingAndGlyphs" stroke="#fff" stroke-width="2.6" stroke-linejoin="round" paint-order="stroke" stroke-opacity=".9">Hyderabad</text>
<text x="198.6" y="289.6" font-size="15.5" font-weight="700" fill="#262626" textLength="70.7" lengthAdjust="spacingAndGlyphs" stroke="#fff" stroke-width="2.6" stroke-linejoin="round" paint-order="stroke" stroke-opacity=".9">parsoaeSo</text>
<text x="148.1" y="356.0" font-size="14" font-weight="400" fill="#26282b" textLength="67.9" lengthAdjust="spacingAndGlyphs" stroke="#fff" stroke-width="2.6" stroke-linejoin="round" paint-order="stroke" stroke-opacity=".9">Bengaluru</text>
<text x="143.0" y="372.6" font-size="15.5" font-weight="700" fill="#262626" textLength="72.4" lengthAdjust="spacingAndGlyphs" stroke="#fff" stroke-width="2.6" stroke-linejoin="round" paint-order="stroke" stroke-opacity=".9">eJonseebo</text>
<text x="265.0" y="375.7" font-size="14" font-weight="400" fill="#26282b" textLength="54.2" lengthAdjust="spacingAndGlyphs" stroke="#fff" stroke-width="2.6" stroke-linejoin="round" paint-order="stroke" stroke-opacity=".9">Chennai</text>
<text x="265.0" y="390.2" font-size="15.5" font-weight="700" fill="#262626" textLength="86.5" lengthAdjust="spacingAndGlyphs" stroke="#fff" stroke-width="2.6" stroke-linejoin="round" paint-order="stroke" stroke-opacity=".9">Qesoirnsoor</text>
<text x="483.3" y="345.4" font-size="14" font-weight="400" fill="#26282b" textLength="57.5" lengthAdjust="spacingAndGlyphs" stroke="#fff" stroke-width="2.6" stroke-linejoin="round" paint-order="stroke" stroke-opacity=".9">Bangkok</text>
<text x="430.9" y="361.6" font-size="15.5" font-weight="700" fill="#262626" textLength="110.5" lengthAdjust="spacingAndGlyphs" stroke="#fff" stroke-width="2.6" stroke-linejoin="round" paint-order="stroke" stroke-opacity=".9">nsuvinwuminuas</text>
<text x="517.0" y="487.9" font-size="13.5" font-weight="400" fill="#26282b" textLength="71.0" lengthAdjust="spacingAndGlyphs" stroke="#fff" stroke-width="2.6" stroke-linejoin="round" paint-order="stroke" stroke-opacity=".9">Kuala Lum</text>
<circle cx="234.2" cy="293.5" r="2.6" fill="#fff" stroke="#444" stroke-width="1.1"/>
<circle cx="221.6" cy="358.8" r="2.6" fill="#fff" stroke="#444" stroke-width="1.1"/>
<circle cx="153.5" cy="269.6" r="2.6" fill="#fff" stroke="#444" stroke-width="1.1"/>
<circle cx="547.3" cy="347.3" r="3.6" fill="#fff" stroke="#222" stroke-width="1.2"/><circle cx="547.3" cy="347.3" r="1.5" fill="#222"/>
<text x="-6.0" y="39.3" font-size="15.6" font-weight="700" fill="#1e1e1e" textLength="96.3" lengthAdjust="spacingAndGlyphs" stroke="#fff" stroke-width="3" stroke-linejoin="round" paint-order="stroke" stroke-opacity=".9">Afghanistan</text>
<text x="70.7" y="103.8" font-size="15.6" font-weight="700" fill="#1e1e1e" textLength="68.1" lengthAdjust="spacingAndGlyphs" stroke="#fff" stroke-width="3" stroke-linejoin="round" paint-order="stroke" stroke-opacity=".9">Pakistan</text>
<text x="225.8" y="216.5" font-size="19.5" font-weight="700" fill="#1e1e1e" textLength="47.7" lengthAdjust="spacingAndGlyphs" stroke="#fff" stroke-width="3" stroke-linejoin="round" paint-order="stroke" stroke-opacity=".9">India</text>
<text x="567.5" y="24.7" font-size="19.5" font-weight="700" fill="#1e1e1e" textLength="46.5" lengthAdjust="spacingAndGlyphs" stroke="#fff" stroke-width="3" stroke-linejoin="round" paint-order="stroke" stroke-opacity=".9">China</text>
<text x="291.0" y="131.3" font-size="15.6" font-weight="700" fill="#1e1e1e" textLength="42.3" lengthAdjust="spacingAndGlyphs" stroke="#fff" stroke-width="3" stroke-linejoin="round" paint-order="stroke" stroke-opacity=".9">Nepal</text>
<text x="376.2" y="144.5" font-size="15.6" font-weight="700" fill="#1e1e1e" textLength="55.2" lengthAdjust="spacingAndGlyphs" stroke="#fff" stroke-width="3" stroke-linejoin="round" paint-order="stroke" stroke-opacity=".9">Bhutan</text>
<text x="356.3" y="196.4" font-size="15.6" font-weight="700" fill="#1e1e1e" textLength="90.6" lengthAdjust="spacingAndGlyphs" stroke="#fff" stroke-width="3" stroke-linejoin="round" paint-order="stroke" stroke-opacity=".9">Bangladesh</text>
<text x="454.4" y="230.6" font-size="15.6" font-weight="700" fill="#1e1e1e" textLength="71.9" lengthAdjust="spacingAndGlyphs" stroke="#fff" stroke-width="3" stroke-linejoin="round" paint-order="stroke" stroke-opacity=".9">Myanmar</text>
<text x="458.9" y="247.4" font-size="15.6" font-weight="700" fill="#1e1e1e" textLength="62.3" lengthAdjust="spacingAndGlyphs" stroke="#fff" stroke-width="3" stroke-linejoin="round" paint-order="stroke" stroke-opacity=".9">(Burma)</text>
<text x="229.5" y="442.1" font-size="15.6" font-weight="700" fill="#1e1e1e" textLength="72.9" lengthAdjust="spacingAndGlyphs" stroke="#fff" stroke-width="3" stroke-linejoin="round" paint-order="stroke" stroke-opacity=".9">Sri Lanka</text>
<text x="557.7" y="266.3" font-size="15.6" font-weight="700" fill="#1e1e1e" textLength="32.3" lengthAdjust="spacingAndGlyphs" stroke="#fff" stroke-width="3" stroke-linejoin="round" paint-order="stroke" stroke-opacity=".9">Laos</text>
<text x="522.6" y="316.8" font-size="15.6" font-weight="700" fill="#1e1e1e" textLength="66.4" lengthAdjust="spacingAndGlyphs" stroke="#fff" stroke-width="3" stroke-linejoin="round" paint-order="stroke" stroke-opacity=".9">Thailand</text>
<text x="571.1" y="367.8" font-size="15.6" font-weight="700" fill="#1e1e1e" textLength="75.9" lengthAdjust="spacingAndGlyphs" stroke="#fff" stroke-width="3" stroke-linejoin="round" paint-order="stroke" stroke-opacity=".9">Cambodia</text>
<text x="533.8" y="474.4" font-size="15.6" font-weight="700" fill="#1e1e1e" textLength="64.2" lengthAdjust="spacingAndGlyphs" stroke="#fff" stroke-width="3" stroke-linejoin="round" paint-order="stroke" stroke-opacity=".9">Malaysia</text>
<g transform="translate(183.7,98.2)"><path d="M0 0 C-1.2 -9.5 -10.7 -15.5 -10.7 -27.3 A10.7 10.7 0 1 1 10.7 -27.3 C10.7 -15.5 1.2 -9.5 0 0Z" fill="#f86d5f" stroke="#2a0b08" stroke-width="1.5" stroke-linejoin="round"/><circle cx="0" cy="-27.6" r="2.9" fill="#0a0000"/></g>
<g transform="translate(196.4,98.2)"><path d="M0 0 C-1.2 -9.5 -10.7 -15.5 -10.7 -27.3 A10.7 10.7 0 1 1 10.7 -27.3 C10.7 -15.5 1.2 -9.5 0 0Z" fill="#f86d5f" stroke="#2a0b08" stroke-width="1.5" stroke-linejoin="round"/><circle cx="0" cy="-27.6" r="2.9" fill="#0a0000"/></g>
<g transform="translate(211.8,104.3)"><path d="M0 0 C-1.2 -9.5 -10.7 -15.5 -10.7 -27.3 A10.7 10.7 0 1 1 10.7 -27.3 C10.7 -15.5 1.2 -9.5 0 0Z" fill="#f86d5f" stroke="#2a0b08" stroke-width="1.5" stroke-linejoin="round"/><circle cx="0" cy="-27.6" r="2.9" fill="#0a0000"/></g>
<g transform="translate(222.4,134.1)"><path d="M0 0 C-1.2 -9.5 -10.7 -15.5 -10.7 -27.3 A10.7 10.7 0 1 1 10.7 -27.3 C10.7 -15.5 1.2 -9.5 0 0Z" fill="#f86d5f" stroke="#2a0b08" stroke-width="1.5" stroke-linejoin="round"/><circle cx="0" cy="-27.6" r="2.9" fill="#0a0000"/></g>
<g transform="translate(477.5,138.8)"><path d="M0 0 C-1.2 -9.5 -10.7 -15.5 -10.7 -27.3 A10.7 10.7 0 1 1 10.7 -27.3 C10.7 -15.5 1.2 -9.5 0 0Z" fill="#f86d5f" stroke="#2a0b08" stroke-width="1.5" stroke-linejoin="round"/><circle cx="0" cy="-27.6" r="2.9" fill="#0a0000"/></g>
<g transform="translate(303.8,148.1)"><path d="M0 0 C-1.2 -9.5 -10.7 -15.5 -10.7 -27.3 A10.7 10.7 0 1 1 10.7 -27.3 C10.7 -15.5 1.2 -9.5 0 0Z" fill="#f86d5f" stroke="#2a0b08" stroke-width="1.5" stroke-linejoin="round"/><circle cx="0" cy="-27.6" r="2.9" fill="#0a0000"/></g>
<g transform="translate(404.2,152.9)"><path d="M0 0 C-1.2 -9.5 -10.7 -15.5 -10.7 -27.3 A10.7 10.7 0 1 1 10.7 -27.3 C10.7 -15.5 1.2 -9.5 0 0Z" fill="#f86d5f" stroke="#2a0b08" stroke-width="1.5" stroke-linejoin="round"/><circle cx="0" cy="-27.6" r="2.9" fill="#0a0000"/></g>
<g transform="translate(422.5,157.9)"><path d="M0 0 C-1.2 -9.5 -10.7 -15.5 -10.7 -27.3 A10.7 10.7 0 1 1 10.7 -27.3 C10.7 -15.5 1.2 -9.5 0 0Z" fill="#f86d5f" stroke="#2a0b08" stroke-width="1.5" stroke-linejoin="round"/><circle cx="0" cy="-27.6" r="2.9" fill="#0a0000"/></g>
<g transform="translate(143.3,162.1)"><path d="M0 0 C-1.2 -9.5 -10.7 -15.5 -10.7 -27.3 A10.7 10.7 0 1 1 10.7 -27.3 C10.7 -15.5 1.2 -9.5 0 0Z" fill="#f86d5f" stroke="#2a0b08" stroke-width="1.5" stroke-linejoin="round"/><circle cx="0" cy="-27.6" r="2.9" fill="#0a0000"/></g>
<g transform="translate(341.1,169.7)"><path d="M0 0 C-1.2 -9.5 -10.7 -15.5 -10.7 -27.3 A10.7 10.7 0 1 1 10.7 -27.3 C10.7 -15.5 1.2 -9.5 0 0Z" fill="#f86d5f" stroke="#2a0b08" stroke-width="1.5" stroke-linejoin="round"/><circle cx="0" cy="-27.6" r="2.9" fill="#0a0000"/></g>
<g transform="translate(201.1,174.5)"><path d="M0 0 C-1.2 -9.5 -10.7 -15.5 -10.7 -27.3 A10.7 10.7 0 1 1 10.7 -27.3 C10.7 -15.5 1.2 -9.5 0 0Z" fill="#f86d5f" stroke="#2a0b08" stroke-width="1.5" stroke-linejoin="round"/><circle cx="0" cy="-27.6" r="2.9" fill="#0a0000"/></g>
<g transform="translate(228.3,187.9)"><path d="M0 0 C-1.2 -9.5 -10.7 -15.5 -10.7 -27.3 A10.7 10.7 0 1 1 10.7 -27.3 C10.7 -15.5 1.2 -9.5 0 0Z" fill="#f86d5f" stroke="#2a0b08" stroke-width="1.5" stroke-linejoin="round"/><circle cx="0" cy="-27.6" r="2.9" fill="#0a0000"/></g>
<g transform="translate(109.6,218.2)"><path d="M0 0 C-1.2 -9.5 -10.7 -15.5 -10.7 -27.3 A10.7 10.7 0 1 1 10.7 -27.3 C10.7 -15.5 1.2 -9.5 0 0Z" fill="#f86d5f" stroke="#2a0b08" stroke-width="1.5" stroke-linejoin="round"/><circle cx="0" cy="-27.6" r="2.9" fill="#0a0000"/></g>
<g transform="translate(111.6,218.2)"><path d="M0 0 C-1.2 -9.5 -10.7 -15.5 -10.7 -27.3 A10.7 10.7 0 1 1 10.7 -27.3 C10.7 -15.5 1.2 -9.5 0 0Z" fill="#f86d5f" stroke="#2a0b08" stroke-width="1.5" stroke-linejoin="round"/><circle cx="0" cy="-27.6" r="2.9" fill="#0a0000"/></g>
<g transform="translate(157.1,218.2)"><path d="M0 0 C-1.2 -9.5 -10.7 -15.5 -10.7 -27.3 A10.7 10.7 0 1 1 10.7 -27.3 C10.7 -15.5 1.2 -9.5 0 0Z" fill="#f86d5f" stroke="#2a0b08" stroke-width="1.5" stroke-linejoin="round"/><circle cx="0" cy="-27.6" r="2.9" fill="#0a0000"/></g>
<g transform="translate(369.2,223.0)"><path d="M0 0 C-1.2 -9.5 -10.7 -15.5 -10.7 -27.3 A10.7 10.7 0 1 1 10.7 -27.3 C10.7 -15.5 1.2 -9.5 0 0Z" fill="#f86d5f" stroke="#2a0b08" stroke-width="1.5" stroke-linejoin="round"/><circle cx="0" cy="-27.6" r="2.9" fill="#0a0000"/></g>
<g transform="translate(348.1,249.6)"><path d="M0 0 C-1.2 -9.5 -10.7 -15.5 -10.7 -27.3 A10.7 10.7 0 1 1 10.7 -27.3 C10.7 -15.5 1.2 -9.5 0 0Z" fill="#f86d5f" stroke="#2a0b08" stroke-width="1.5" stroke-linejoin="round"/><circle cx="0" cy="-27.6" r="2.9" fill="#0a0000"/></g>
<g transform="translate(153.7,269.6)"><path d="M0 0 C-1.2 -9.5 -10.7 -15.5 -10.7 -27.3 A10.7 10.7 0 1 1 10.7 -27.3 C10.7 -15.5 1.2 -9.5 0 0Z" fill="#f86d5f" stroke="#2a0b08" stroke-width="1.5" stroke-linejoin="round"/><circle cx="0" cy="-27.6" r="2.9" fill="#0a0000"/></g>
<g transform="translate(301.6,287.9)"><path d="M0 0 C-1.2 -9.5 -10.7 -15.5 -10.7 -27.3 A10.7 10.7 0 1 1 10.7 -27.3 C10.7 -15.5 1.2 -9.5 0 0Z" fill="#f86d5f" stroke="#2a0b08" stroke-width="1.5" stroke-linejoin="round"/><circle cx="0" cy="-27.6" r="2.9" fill="#0a0000"/></g>
<g transform="translate(281.4,305.3)"><path d="M0 0 C-1.2 -9.5 -10.7 -15.5 -10.7 -27.3 A10.7 10.7 0 1 1 10.7 -27.3 C10.7 -15.5 1.2 -9.5 0 0Z" fill="#f86d5f" stroke="#2a0b08" stroke-width="1.5" stroke-linejoin="round"/><circle cx="0" cy="-27.6" r="2.9" fill="#0a0000"/></g>
<g transform="translate(258.3,355.3)"><path d="M0 0 C-1.2 -9.5 -10.7 -15.5 -10.7 -27.3 A10.7 10.7 0 1 1 10.7 -27.3 C10.7 -15.5 1.2 -9.5 0 0Z" fill="#f86d5f" stroke="#2a0b08" stroke-width="1.5" stroke-linejoin="round"/><circle cx="0" cy="-27.6" r="2.9" fill="#0a0000"/></g>
<g transform="translate(182.3,358.0)"><path d="M0 0 C-1.2 -9.5 -10.7 -15.5 -10.7 -27.3 A10.7 10.7 0 1 1 10.7 -27.3 C10.7 -15.5 1.2 -9.5 0 0Z" fill="#f86d5f" stroke="#2a0b08" stroke-width="1.5" stroke-linejoin="round"/><circle cx="0" cy="-27.6" r="2.9" fill="#0a0000"/></g>
<g transform="translate(252.2,387.4)"><path d="M0 0 C-1.2 -9.5 -10.7 -15.5 -10.7 -27.3 A10.7 10.7 0 1 1 10.7 -27.3 C10.7 -15.5 1.2 -9.5 0 0Z" fill="#f86d5f" stroke="#2a0b08" stroke-width="1.5" stroke-linejoin="round"/><circle cx="0" cy="-27.6" r="2.9" fill="#0a0000"/></g>
<g transform="translate(203.4,402.0)"><path d="M0 0 C-1.2 -9.5 -10.7 -15.5 -10.7 -27.3 A10.7 10.7 0 1 1 10.7 -27.3 C10.7 -15.5 1.2 -9.5 0 0Z" fill="#f86d5f" stroke="#2a0b08" stroke-width="1.5" stroke-linejoin="round"/><circle cx="0" cy="-27.6" r="2.9" fill="#0a0000"/></g>
<text x="12.6" y="490.2" font-size="24" font-weight="400" textLength="70.7" lengthAdjust="spacingAndGlyphs" fill="#fff" stroke="#fff" stroke-width="3" stroke-linejoin="round" stroke-opacity=".8">Google</text>
<text x="12.6" y="490.2" font-size="24" font-weight="400" textLength="70.7" lengthAdjust="spacingAndGlyphs" stroke-width=".7"><tspan fill="#4285f4" stroke="#4285f4">G</tspan><tspan fill="#ea4335" stroke="#ea4335">o</tspan><tspan fill="#fbbc05" stroke="#fbbc05">o</tspan><tspan fill="#4285f4" stroke="#4285f4">g</tspan><tspan fill="#34a853" stroke="#34a853">l</tspan><tspan fill="#ea4335" stroke="#ea4335">e</tspan></text>
<rect x="179.0" y="482.5" width="123.0" height="18" fill="#f5f5f5" opacity=".74"/>
<rect x="303.0" y="482.5" width="285.0" height="18" fill="#f5f5f5" opacity=".74"/>
<text x="186.1" y="495.2" font-size="12.3" font-weight="400" fill="#111" textLength="107.5" lengthAdjust="spacingAndGlyphs">Keyboard shortcuts</text>
<text x="309.7" y="495.2" font-size="12.3" font-weight="400" fill="#111" textLength="220.0" lengthAdjust="spacingAndGlyphs">Map data ©2025 Google, TMap Mobility</text>
<text x="545.9" y="495.2" font-size="12.3" font-weight="400" fill="#111" textLength="33.3" lengthAdjust="spacingAndGlyphs">Terms</text>
<line x1="538.8" y1="485.0" x2="538.8" y2="499.0" stroke="#555" stroke-width="1" stroke-dasharray="1.4 2.4" opacity=".7"/>
<rect x="525.0" y="12.8" width="50" height="50" rx="3" fill="#fff"/>
<path d="M540.3 34.1 v-5.8 h5.8 M554.7 28.3 h5.8 v5.8 M540.3 41.8 v5.8 h5.8 M554.7 47.6 h5.8 v-5.8" fill="none" stroke="#5c5c5c" stroke-width="2.4"/>
<circle cx="550.0" cy="445.0" r="25" fill="#fff"/>
<g transform="translate(550.0,445.0)" fill="none" stroke="#666" stroke-width="2.6" stroke-linejoin="miter"><path d="M-4.1 -8.5 L0 -12.6 L4.1 -8.5"/><path d="M-4.1 8.3 L0 12.4 L4.1 8.3"/><path d="M-8.3 -4.1 L-12.4 0 L-8.3 4.1"/><path d="M8.3 -4.1 L12.4 0 L8.3 4.1"/></g>
</svg></div>
</body></html>
